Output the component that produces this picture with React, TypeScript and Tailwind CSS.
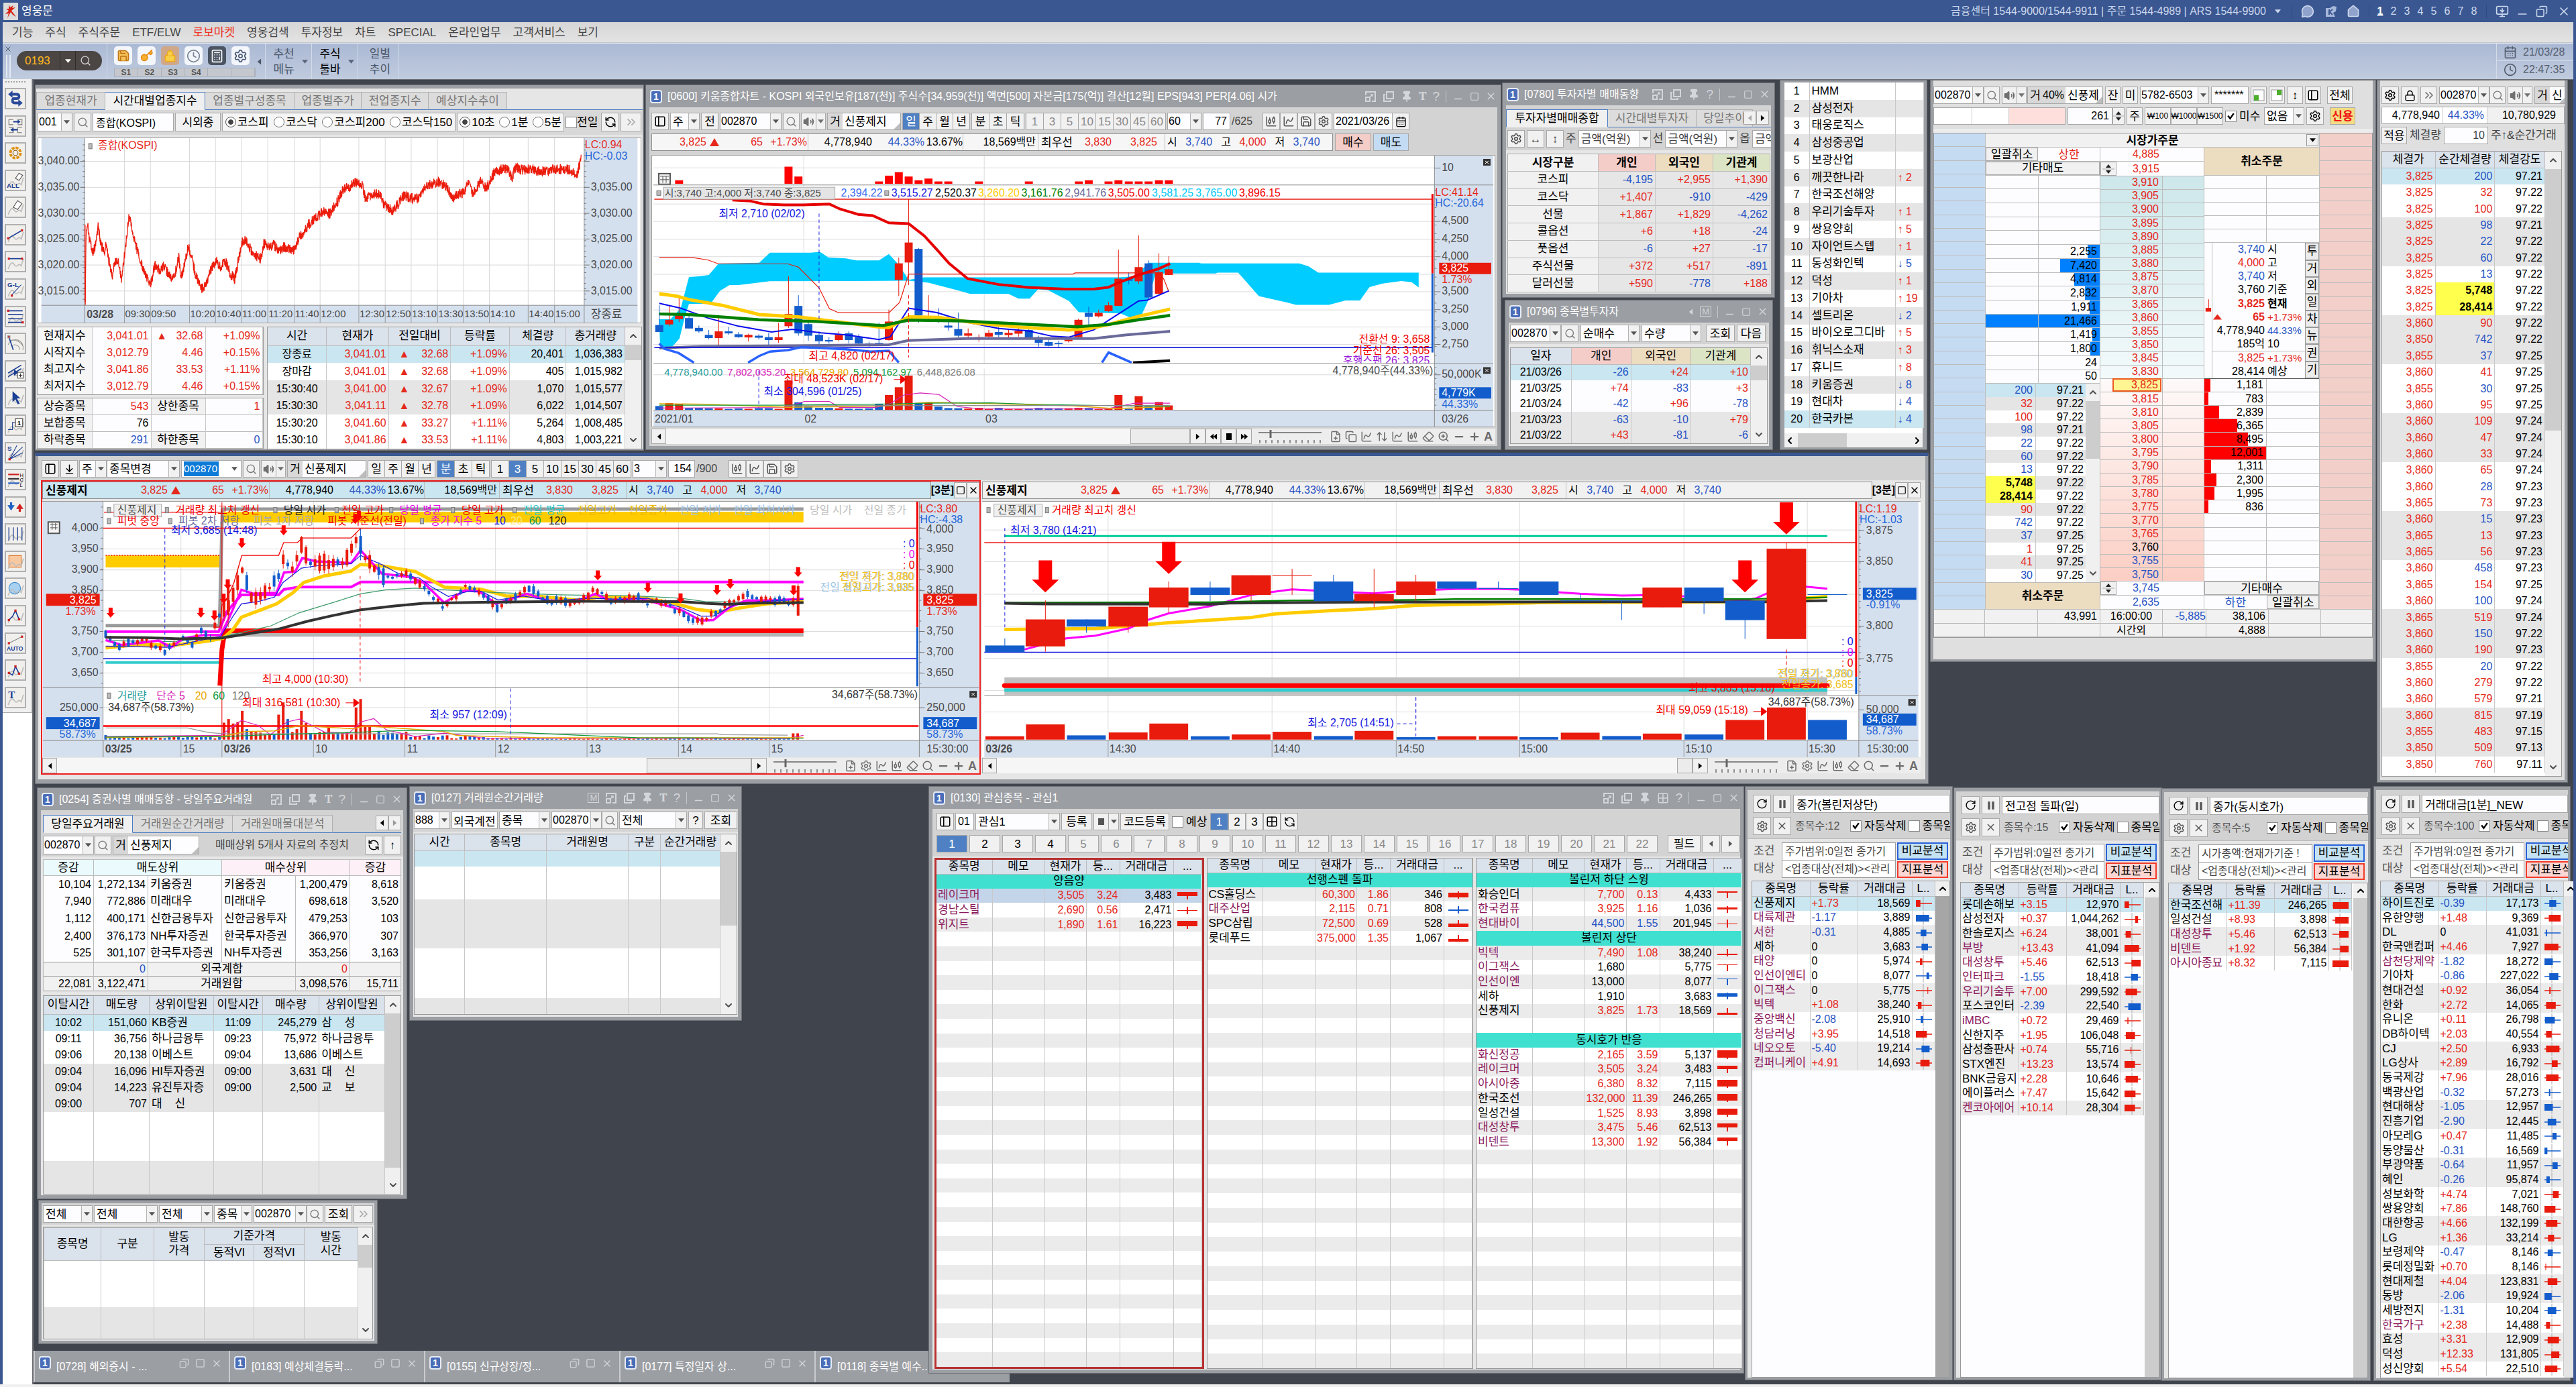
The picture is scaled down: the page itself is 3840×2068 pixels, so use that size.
import type { ReactNode } from "react";
import clsx from "clsx";
import {
  Search,
  Settings,
  Save,
  RotateCw,
  Volume2,
  Pin,
  Copy,
  Square,
  Minus,
  Plus,
  X,
  CalendarDays,
  Clock,
  Home,
  MessageCircle,
  MonitorDown,
  Key,
  Lock,
  Calculator,
  Pause,
  ChevronUp,
  ChevronDown,
  ChevronLeft,
  ChevronRight,
  ChevronsRight,
  ArrowUpDown,
  PanelLeft,
  ArrowDownToLine,
  ChartCandlestick,
  ChartSpline,
  FilePlus,
  Eraser,
  ZoomIn,
  Grid2x2,
  RefreshCcw,
} from "lucide-react";

/* ---------- helpers ---------- */

const R = "text-[#e5281b]";
const B = "text-[#2753c4]";
const V = "text-[#8b1a5c]";

type P = [number, number];

function rnd(i: number) {
  const s = Math.sin(i * 12.9898) * 43758.5453;
  return s - Math.floor(s);
}

function lerpAt(pts: P[], x: number) {
  for (let i = 1; i < pts.length; i++) {
    if (x <= pts[i][0]) {
      const [x0, y0] = pts[i - 1];
      const [x1, y1] = pts[i];
      return y0 + ((y1 - y0) * (x - x0)) / (x1 - x0 || 1);
    }
  }
  return pts[pts.length - 1][1];
}

function makeScale(kx: number, ky: number, ox: number, oy: number) {
  const x = (v: number) => v / kx + ox;
  const y = (v: number) => v / ky + oy;
  const line = (pts: P[]) => pts.map((p) => `${x(p[0]).toFixed(1)},${y(p[1]).toFixed(1)}`).join(" ");
  return { x, y, line };
}

function signed(v: string) {
  if (v.startsWith("-")) return B;
  if (v.startsWith("+")) return R;
  return "text-black";
}

/* ---------- small controls ---------- */

function Tri({ className }: { className?: string }) {
  return (
    <svg viewBox="0 0 10 6" className={clsx("w-[9px] h-[6px] shrink-0", className)}>
      <path d="M0 0H10L5 6Z" fill="currentColor" />
    </svg>
  );
}

function UpDown() {
  return (
    <svg viewBox="0 0 18 20" className="w-[18px] h-5 shrink-0">
      <path d="M5 8L9 3L13 8ZM5 12L9 17L13 12Z" fill="#222" />
      <path d="M0 10H18" stroke="#a8a8a8" />
    </svg>
  );
}

function Btn({ children, className, label }: { children?: ReactNode; className?: string; label?: string }) {
  return (
    <button
      aria-label={label}
      className={clsx(
        "h-full shrink-0 flex items-center justify-center border border-[#a8a8a8] text-[17px] leading-none whitespace-nowrap overflow-hidden",
        className?.includes("bg-") ? "" : "bg-[#f1f1f1]",
        className
      )}
    >
      {children}
    </button>
  );
}

function Combo({ value, label, className, num }: { value: string; label: string; className?: string; num?: boolean }) {
  return (
    <div className={clsx("relative h-full shrink-0 border border-[#a8a8a8] bg-[#fdfdff]", className)}>
      <select
        aria-label={label}
        className={clsx("appearance-none w-full h-full pr-0 bg-transparent leading-none", num ? "pl-px text-[16px]" : "pl-[3px] text-[17px]")}
      >
        <option>{value}</option>
      </select>
      <span className="absolute right-0 inset-y-0 w-4 border-l border-[#b5b5b5] bg-[#f1f1f1] flex items-center justify-center pointer-events-none text-[#555]">
        <Tri />
      </span>
    </div>
  );
}

function Field({ value, label, className, size = "text-[16px]" }: { value: string; label: string; className?: string; size?: string }) {
  return (
    <input
      aria-label={label}
      defaultValue={value}
      className={clsx("h-full min-w-0 border border-[#a8a8a8] bg-[#fdfdff] px-1 leading-none", size, className)}
    />
  );
}

function Check({ text, on, className }: { text: string; on?: boolean; className?: string }) {
  return (
    <label className={clsx("flex items-center gap-1 text-[17px] leading-none whitespace-nowrap shrink-0 overflow-hidden", className)}>
      <span className="relative w-[17px] h-[17px] shrink-0">
        <input type="checkbox" defaultChecked={on} className="appearance-none block w-full h-full border border-[#8a8a8a] bg-white" />
        {on && (
          <svg viewBox="0 0 12 12" className="absolute inset-[2px] w-[13px] h-[13px] pointer-events-none">
            <path d="M2 5L5 9L10 2" fill="none" stroke="#000" strokeWidth="2.200" />
          </svg>
        )}
      </span>
      {text}
    </label>
  );
}

function Radio({ text, on, name }: { text: string; on?: boolean; name: string }) {
  return (
    <label className="flex items-center gap-[2px] text-[17px] leading-none whitespace-nowrap">
      <input
        type="radio"
        name={name}
        defaultChecked={on}
        className="appearance-none w-4 h-4 rounded-full border border-[#777] bg-white checked:border-[#555] checked:bg-[radial-gradient(circle,#444_35%,#fff_42%)]"
      />
      {text}
    </label>
  );
}

function IconSearch({ className }: { className?: string }) {
  return (
    <Btn label="검색" className={clsx("text-[#7b7b7b]", className ?? "w-[25px]")}>
      <Search size={17} />
    </Btn>
  );
}

function Speaker() {
  return (
    <div className="flex h-full shrink-0 text-[#707070]">
      <Btn label="음성" className="w-[23px]">
        <Volume2 size={17} fill="#707070" />
      </Btn>
      <Btn label="음성 메뉴" className="w-[15px] -ml-px">
        <Tri />
      </Btn>
    </div>
  );
}

function StockName({ mark = "거", name, className, pct }: { mark?: string; name: string; className?: string; pct?: string }) {
  return (
    <div className={clsx("h-full shrink-0 flex border border-[#a8a8a8] bg-[#fdfdff] text-[17px] leading-none overflow-hidden relative", className)}>
      <span className="w-[22px] bg-[#d8d8d8] flex items-center justify-center shrink-0">{mark}</span>
      {pct && <span className="bg-[#d8d8d8] text-[16px] flex items-center pr-[2px] shrink-0">{pct}</span>}
      <span className="flex items-center pl-[3px] whitespace-nowrap">{name}</span>
      <svg viewBox="0 0 10 10" className="absolute right-0 bottom-0 w-[10px] h-[10px]">
        <path d="M10 0V10H0Z" fill="#bdbdbd" />
      </svg>
    </div>
  );
}

function VScroll({ thumb, className }: { thumb: string; className?: string }) {
  return (
    <div className={clsx("shrink-0 bg-[#f0f0f0] flex flex-col items-center text-[#505050]", className ?? "w-6")}>
      <ChevronUp size={16} strokeWidth={3} className="my-[5px] shrink-0" />
      <div className={clsx("w-full shrink-0 bg-[#cdcdcd]", thumb)} />
      <ChevronDown size={16} strokeWidth={3} className="mt-auto mb-[5px] shrink-0" />
    </div>
  );
}

/* ---------- window frame ---------- */

const winIcons: Record<string, ReactNode> = {
  fit: (
    <svg viewBox="0 0 18 18" className="w-[18px] h-[18px]" fill="none" stroke="currentColor" strokeWidth="2">
      <path d="M2 7V2H16V16H11" />
      <path d="M2 10H8V16H2Z" />
      <path d="M8 10L12 6M9 6H12V9" strokeWidth="1.500" />
    </svg>
  ),
  copy: (
    <svg viewBox="0 0 18 18" className="w-[18px] h-[18px]" fill="none" stroke="currentColor" strokeWidth="2">
      <path d="M6 2H16V12H6Z" />
      <path d="M4 6H2V16H12V14" />
    </svg>
  ),
  pin: <Pin size={18} fill="#d3d6da" />,
  T: <b className="font-serif text-[19px]">T</b>,
  help: <b className="text-[19px] font-normal">?</b>,
  grid: <Grid2x2 size={18} />,
  M: <span className="border border-[#d3d6da] text-[13px] px-[2px]">M</span>,
  left: <Tri className="rotate-90" />,
};

function Badge() {
  return (
    <span className="w-[18px] h-5 shrink-0 rounded-[4px] border-2 border-[#e6ebf5] bg-[#4a6db8] text-white text-[14px] font-bold leading-none flex items-center justify-center">
      1
    </span>
  );
}

function Win({ title, icons, className, children, pad, bg = "bg-[#d3d3d3]" }: { title?: string; icons?: string[]; className: string; children: ReactNode; pad?: string; bg?: string }) {
  return (
    <section className={clsx("absolute flex flex-col border border-[#6d7075] bg-[#9b9ea3]", className)}>
      {title && (
        <header className="h-[33px] shrink-0 flex items-center gap-2 pl-[6px] pr-[6px] text-white">
          <Badge />
          <h2 className="flex-1 min-w-0 overflow-hidden whitespace-nowrap text-[16px] leading-[20px]">{title}</h2>
          <div className="flex items-center gap-[9px] text-[#d3d6da] shrink-0">
            {icons?.map((k) => (
              <button key={k} aria-label={k} className="flex items-center justify-center leading-none">
                {winIcons[k]}
              </button>
            ))}
            <span className="w-px h-[18px] bg-[#c4c7cb]" />
            <button aria-label="최소화"><Minus size={17} className="translate-y-1" /></button>
            <button aria-label="최대화"><Square size={14} /></button>
            <button aria-label="닫기"><X size={17} /></button>
          </div>
        </header>
      )}
      <div className={clsx("flex-1 min-h-0 flex flex-col", bg, pad ?? "mx-[5px] mb-[5px]")}>{children}</div>
    </section>
  );
}

function Tabs({ items, className }: { items: [string, string][]; className?: string }) {
  return (
    <div className={clsx("flex h-[27px] shrink-0 border-b border-[#4a7cc4]", className)}>
      {items.map(([t, w], i) => (
        <button
          key={t}
          className={clsx(
            "h-[27px] border text-[17px] leading-none whitespace-nowrap overflow-hidden",
            w,
            t.startsWith("*") ? "border-[#4a7cc4] border-b-[#eee] bg-[#f0f0f0] text-black" : "border-[#b0b0b0] border-b-[#4a7cc4] bg-[#dcdcdc] text-[#777]",
            i > 0 && "border-l-0"
          )}
        >
          {t.replace("*", "")}
        </button>
      ))}
    </div>
  );
}

/* ---------- tables ---------- */

type Cell = string | [string, string];

function Grid({ cols, head, rows, align, className, rowClass, headClass = "h-6 bg-[#dae2ec]", headCls }: {
  cols: string[];
  head?: string[];
  rows: Cell[][];
  align: string[];
  className?: string;
  rowClass?: (i: number) => string;
  headClass?: string;
  headCls?: string[];
}) {
  return (
    <table className={clsx("table-fixed border-collapse bg-[#fdfdff] text-[16px] leading-[18px]", className)}>
      <colgroup>
        {cols.map((c, i) => (
          <col key={i} className={c} />
        ))}
      </colgroup>
      {head && (
        <thead>
          <tr className={headClass}>
            {head.map((h, i) => (
              <th key={i} className={clsx("font-normal text-[17px] p-0 border-r border-b border-[#bcbcbc] whitespace-nowrap overflow-hidden", headCls?.[i])}>
                {h}
              </th>
            ))}
          </tr>
        </thead>
      )}
      <tbody>
        {rows.map((r, i) => (
          <tr key={i} className={clsx("h-[18px]", rowClass?.(i))}>
            {r.map((c, j) => {
              const [t, cls] = typeof c === "string" ? [c, ""] : c;
              return (
                <td key={j} className={clsx("py-0 px-[3px] border-r border-[#c8c8c8] whitespace-nowrap overflow-hidden", align[j], cls)}>
                  {t}
                </td>
              );
            })}
          </tr>
        ))}
      </tbody>
    </table>
  );
}

const L = "text-left text-[17px]";
const C = "text-center";
const E = "text-right";
const band3 = (i: number) => (i === 0 ? "bg-[#c9e6f1]" : i % 6 >= 3 ? "bg-[#e5e5e5]" : "bg-white");

/* ---------- svg pieces ---------- */

function T({ x, y, c = "#4a4a4a", children, end, bold, size = 16 }: { x: number; y: number; c?: string; children: ReactNode; end?: boolean; bold?: boolean; size?: number }) {
  return (
    <text x={x} y={y} fill={c} fontSize={size} fontWeight={bold ? 700 : 400} textAnchor={end ? "end" : "start"} dominantBaseline="central">
      {children}
    </text>
  );
}

type Candle = [number, number, number, number, number, "r" | "b"];
const tone = { r: "#e81b0c", b: "#125ccc" };

function Candles({ data, w, s }: { data: Candle[]; w: number; s: ReturnType<typeof makeScale> }) {
  return (
    <g>
      {data.map(([x, hi, top, bot, lo, c], i) => (
        <g key={i} fill={tone[c]} stroke={tone[c]}>
          <line x1={s.x(x)} x2={s.x(x)} y1={s.y(hi)} y2={s.y(lo)} />
          <rect x={s.x(x) - w / 2} y={s.y(top)} width={w} height={Math.max(1, s.y(bot) - s.y(top))} stroke="none" />
        </g>
      ))}
    </g>
  );
}

function Ticks({ x, y0, y1, step, dir }: { x: number; y0: number; y1: number; step: number; dir: number }) {
  const out = [];
  for (let y = y0; y < y1; y += step) out.push(y);
  return (
    <g stroke="#777">
      {out.map((y) => (
        <line key={y} x1={x} x2={x + dir * 3} y1={y} y2={y} />
      ))}
    </g>
  );
}

function CloseMark({ x, y }: { x: number; y: number }) {
  return (
    <g>
      <rect x={x} y={y} width="11" height="10" fill="#333" />
      <path d={`M${x + 3} ${y + 3}l5 4m0 -4l-5 4`} stroke="#fff" />
    </g>
  );
}

/* ---------- [업종] index chart ---------- */

const kospi: P[] = [
  [197, 1040], [199, 790], [203, 775], [208, 830], [216, 870], [222, 840], [228, 780], [235, 840], [243, 870], [248, 840],
  [255, 900], [262, 950], [270, 895], [277, 905], [285, 960], [292, 880], [303, 745], [310, 780], [318, 840], [328, 880],
  [340, 935], [350, 965], [357, 975], [366, 910], [375, 930], [388, 915], [405, 960], [416, 935], [424, 885], [430, 955],
  [440, 900], [447, 845], [456, 890], [465, 950], [475, 980], [483, 998], [492, 970], [500, 930], [514, 895], [525, 920],
  [537, 900], [550, 945], [560, 960], [568, 900], [578, 830], [590, 830], [598, 858], [608, 875], [622, 893], [631, 835],
  [640, 848], [655, 842], [665, 860], [680, 850], [703, 862], [715, 820], [725, 800], [740, 770], [765, 740], [775, 722],
  [790, 735], [810, 690], [822, 650], [840, 640], [855, 625], [870, 640], [878, 688], [890, 670], [910, 665], [922, 700],
  [933, 718], [945, 722], [957, 700], [970, 670], [985, 680], [1005, 683], [1018, 650], [1035, 630], [1055, 625], [1075, 640],
  [1088, 682], [1105, 665], [1118, 660], [1127, 625], [1137, 668], [1157, 622], [1170, 648], [1190, 590], [1210, 580], [1225, 580],
  [1232, 618], [1240, 575], [1260, 583], [1280, 580], [1300, 588], [1330, 583], [1350, 580], [1375, 583], [1390, 598], [1398, 560], [1401, 535],
];

function IndexChart() {
  const s = makeScale(1.6165, 2.306, -56, -205);
  const pts: P[] = [];
  for (let x = 197; x < 1401; x += 0.6) pts.push([x, lerpAt(kospi, x) + (rnd(x) - 0.5) * 36]);
  const gy = [553, 643, 733, 822, 912, 1002];
  const gx: [number, string][] = [
    [292, "09:30"], [355, "09:50"], [450, "10:20"], [513, "10:40"], [576, "11:00"], [640, "11:20"], [704, "11:40"], [767, "12:00"], [861, "12:30"],
    [925, "12:50"], [988, "13:10"], [1052, "13:30"], [1115, "13:50"], [1178, "14:10"], [1272, "14:40"], [1336, "15:00"],
  ];
  const vals = ["3,040.00", "3,035.00", "3,030.00", "3,025.00", "3,020.00", "3,015.00"];
  return (
    <svg viewBox="0 0 895 277" className="block w-full h-[277px] shrink-0 border border-[#a0a0a0] bg-white">
      <rect width="65" height="277" fill="#d5e0ee" />
      <rect x="815" width="80" height="277" fill="#d5e0ee" />
      <rect y="251" width="895" height="26" fill="#d5e0ee" />
      <g stroke="#d9d9d9">
        {gy.map((y) => <line key={y} x1="65" x2="815" y1={s.y(y)} y2={s.y(y)} />)}
        {gx.map(([x]) => <line key={x} x1={s.x(x)} x2={s.x(x)} y1="0" y2="251" />)}
      </g>
      <path d="M65 0V277M815 0V277M0 251H895" stroke="#8a8a8a" fill="none" />
      {gy.map((y, i) => (
        <g key={y}>
          <T x={57} y={s.y(y - 2)} end>{vals[i]}</T>
          <T x={825} y={s.y(y - 2)}>{i === 0 ? "" : vals[i]}</T>
          <path d={`M58 ${s.y(y)}h7M815 ${s.y(y)}h8`} stroke="#777" />
        </g>
      ))}
      <Ticks x={65} y0={10} y1={250} step={8} dir={-1} />
      <Ticks x={815} y0={10} y1={250} step={8} dir={1} />
      {gx.map(([x, t]) => (
        <g key={t}>
          <line x1={s.x(x)} x2={s.x(x)} y1="251" y2="277" stroke="#999" />
          <T x={s.x(x) + 1} y={264} size={15}>{t}</T>
        </g>
      ))}
      <T x={68} y={264} bold>03/28</T>
      <T x={825} y={264} size={17}>장종료</T>
      <polyline points={s.line(pts)} fill="none" stroke="#ec1c0c" strokeWidth="1.300" />
      <path d="M65.500 246V130" stroke="#ec1c0c" strokeWidth="1.500" />
      <rect x="71" y="8" width="5" height="8" fill="#bbb" stroke="#777" />
      <T x={85} y={11} c="#e5281b">종합(KOSPI)</T>
      <T x={816} y={10} c="#e5281b">LC:0.94</T>
      <T x={816} y={27} c="#2466d8">HC:-0.03</T>
    </svg>
  );
}

function IndexWindow() {
  const idx: Cell[][] = [
    ["현재지수", ["3,041.01", R], ["▲   32.68", R + " whitespace-pre"], ["+1.09%", R]],
    ["시작지수", ["3,012.79", R], ["4.46", R], ["+0.15%", R]],
    ["최고지수", ["3,041.86", R], ["33.53", R], ["+1.11%", R]],
    ["최저지수", ["3,012.79", R], ["4.46", R], ["+0.15%", R]],
  ];
  const cnt: Cell[][] = [
    ["상승종목", ["543", R], ["상한종목", "!text-center text-[17px] bg-[#f1f1f1]"], ["1", R]],
    ["보합종목", "76", "", ""],
    ["하락종목", ["291", B], ["하한종목", "!text-center text-[17px] bg-[#f1f1f1]"], ["0", B]],
  ];
  const up = (t: string, p: string, d: string, r: string, v: string, tv: string): Cell[] => [t, [p, R], [`▲    ${d}`, R + " whitespace-pre"], [r, R], v, tv];
  const rows = [
    up("장종료", "3,041.01", "32.68", "+1.09%", "20,401", "1,036,383"),
    up("장마감", "3,041.01", "32.68", "+1.09%", "405", "1,015,982"),
    up("15:30:40", "3,041.00", "32.67", "+1.09%", "1,070", "1,015,577"),
    up("15:30:30", "3,041.11", "32.78", "+1.09%", "6,022", "1,014,507"),
    up("15:30:20", "3,041.60", "33.27", "+1.11%", "5,264", "1,008,485"),
    up("15:30:10", "3,041.86", "33.53", "+1.11%", "4,803", "1,003,221"),
  ];
  return (
    <Win className="left-[4px] top-[8px] w-[908px] h-[546px]" pad="mt-[5px] mx-px mb-[2px]" bg="bg-[#e6e6e6]">
      <Tabs
        className="mt-[5px]"
        items={[["업종현재가", "w-[103px]"], ["*시간대별업종지수", "w-[149px]"], ["업종별구성종목", "w-[133px]"], ["업종별주가", "w-[100px]"], ["전업종지수", "w-[100px]"], ["예상지수추이", "w-[117px]"]]}
      />
      <div className="bg-[#d8d8d8] pt-1 pb-[5px] px-[2px] mb-1 shrink-0">
        <div className="flex h-7 gap-[2px]">
          <Combo value="001" label="업종코드" className="w-[52px]" num />
          <IconSearch className="w-[26px]" />
          <Field value="종합(KOSPI)" label="업종명" className="w-[121px]" />
          <Btn className="w-[68px]">시외종</Btn>
          <fieldset className="flex items-center justify-around w-[348px] border border-[#a8a8a8] bg-[#f5f5f5]">
            <Radio name="mkt" text="코스피" on />
            <Radio name="mkt" text="코스닥" />
            <Radio name="mkt" text="코스피200" />
            <Radio name="mkt" text="코스닥150" />
          </fieldset>
          <fieldset className="flex items-center justify-around w-[160px] border border-[#a8a8a8] bg-[#f5f5f5]">
            <Radio name="unit" text="10초" on />
            <Radio name="unit" text="1분" />
            <Radio name="unit" text="5분" />
          </fieldset>
          <Check text="전일" className="w-[51px] !gap-0" />
          <Btn label="새로고침" className="w-[27px]"><RefreshCcw size={18} /></Btn>
          <Btn label="더보기" className="flex-1 text-[#aaa]"><ChevronsRight size={20} /></Btn>
        </div>
      </div>
      <div className="px-[2px] flex flex-col flex-1 min-h-0">
        <IndexChart />
        <div className="flex gap-2 mt-[6px]">
          <div className="w-[335px] shrink-0">
            <Grid cols={["w-[81px]", "w-[88px]", "w-[81px]", "w-[85px]"]} align={["text-center text-[17px] bg-[#f6f6f6]", E, E, E]} rows={idx} className="w-full h-[100px] outline outline-[#9a9a9a]" />
            <Grid
              cols={["w-[81px]", "w-[88px]", "w-[81px]", "w-[85px]"]}
              align={["text-center text-[17px] bg-[#f1f1f1]", E, E, E]}
              rows={cnt}
              rowClass={() => "border-b border-[#bbb]"}
              className="w-full h-[75px] mt-[6px] outline outline-[#9a9a9a]"
            />
          </div>
          <div className="flex flex-1 outline outline-[#9a9a9a]">
            <Grid
              cols={["w-[87px]", "w-[92px]", "w-[92px]", "w-[87px]", "w-[84px]", "w-[87px]"]}
              head={["시간", "현재가", "전일대비", "등락률", "체결량", "총거래량"]}
              align={[C, E, E, E, E, E]}
              rows={rows}
              headClass="h-[27px] bg-[#dae2ec]"
              rowClass={(i) => (i === 0 ? "bg-[#c9e6f1]" : i === 2 || i === 3 ? "bg-[#e5e5e5]" : "bg-white")}
              className="flex-1 h-[181px]"
            />
            <VScroll thumb="h-[23px]" className="w-6" />
          </div>
        </div>
      </div>
    </Win>
  );
}

/* ---------- quote strip shared by the charts ---------- */

function Quote({ name, className }: { name?: string; className?: string }) {
  const cell = "flex items-center h-full border-r border-[#bdbdbd] shrink-0";
  return (
    <div className={clsx("flex items-center border border-[#8f8f8f] text-[16px] leading-none whitespace-nowrap overflow-hidden", className)}>
      {name && <b className="w-[105px] shrink-0 pl-1 text-[17px]">{name}</b>}
      <div className={clsx(cell, "w-[233px]", R)}>
        <span className="w-[81px] text-right">3,825</span>
        <span className="w-6 flex justify-center">
          <svg viewBox="0 0 14 12" className="w-[14px] h-3"><path d="M7 0L14 12H0Z" fill="currentColor" /></svg>
        </span>
        <span className="w-[60px] text-right">65</span>
        <span className="w-[66px] text-right">+1.73%</span>
      </div>
      <div className={clsx(cell, "w-[231px]")}>
        <span className="w-[95px] text-right">4,778,940</span>
        <span className={clsx("w-[78px] text-right", B)}>44.33%</span>
        <span className="w-[57px] text-right">13.67%</span>
      </div>
      <div className={clsx(cell, "w-[112px] justify-end pr-[3px]")}>18,569백만</div>
      <div className={clsx(cell, "w-[189px]")}>
        <span className="w-[52px] pl-1 text-[17px]">최우선</span>
        <span className={clsx("w-[57px] text-right", R)}>3,830</span>
        <span className={clsx("w-[68px] text-right", R)}>3,825</span>
      </div>
      <div className="flex items-center gap-[13px] pl-[3px]">
        <span>시 <span className={clsx("pl-2", B)}>3,740</span></span>
        <span>고 <span className={clsx("pl-2", R)}>4,000</span></span>
        <span>저 <span className={clsx("pl-2", B)}>3,740</span></span>
      </div>
    </div>
  );
}

function ChartScroll({ thumb, player }: { thumb: string; player?: boolean }) {
  return (
    <div className="flex h-[23px] shrink-0 items-stretch bg-[#ededed] text-[#6d6d6d]">
      <Btn label="왼쪽" className="w-[22px]"><Tri className="rotate-90 text-black" /></Btn>
      <div className="flex-1 bg-[#f6f6f6] flex justify-end">
        <div className={clsx("border border-[#a8a8a8] bg-[#ececec]", thumb)} />
      </div>
      <Btn label="오른쪽" className="w-[23px]"><Tri className="-rotate-90 text-black" /></Btn>
      {player && (
        <>
          <Btn label="뒤로" className="w-[23px] text-black"><Tri className="rotate-90" /><Tri className="rotate-90 -ml-1" /></Btn>
          <Btn label="정지" className="w-[23px] text-black"><span className="w-2 h-[10px] bg-black" /></Btn>
          <Btn label="앞으로" className="w-[23px] text-black"><Tri className="-rotate-90" /><Tri className="-rotate-90 -ml-1" /></Btn>
        </>
      )}
      <svg viewBox="0 0 100 23" className="w-[100px] mx-2">
        <path d="M2 6H96" stroke="#888" strokeWidth="2" />
        <path d="M20 2V14" stroke="#666" strokeWidth="3" />
        {Array.from({ length: 11 }, (_, i) => <path key={i} d={`M${4 + i * 9} 17v5`} stroke="#333" />)}
      </svg>
      <div className="flex items-center gap-[5px] pr-1">
        <FilePlus size={18} />
        {player ? <><Copy size={18} /><ChartSpline size={18} /><ArrowUpDown size={18} /></> : <Settings size={18} />}
        <ChartSpline size={18} />
        <ChartCandlestick size={18} />
        <Eraser size={18} />
        {player ? <ZoomIn size={18} /> : <Search size={18} />}
        <Minus size={18} strokeWidth={3} />
        <Plus size={18} strokeWidth={3} />
        <b className="text-[18px] leading-none">A</b>
      </div>
    </div>
  );
}

function PeriodBar({ on, unit, muted, combo }: { on: string; unit?: string; muted?: boolean; combo: string }) {
  const one = (t: string, w: string, sel: boolean, dim?: boolean) => (
    <Btn key={t} className={clsx(w, "-ml-px first:ml-0", sel ? "bg-[#4f80c4] text-white" : dim ? "text-[#8a8a8a]" : "")}>{t}</Btn>
  );
  return (
    <>
      <div className="flex h-full">{["일", "주", "월", "년"].map((t) => one(t, "w-[26px]", t === on))}</div>
      <div className="flex h-full">{["분", "초", "틱"].map((t) => one(t, "w-[27px]", t === on))}</div>
      <div className="flex h-full">{["1", "3", "5", "10", "15", "30", "45", "60"].map((t) => one(t, "w-[27px]", t === unit, muted))}</div>
      <Combo value={combo} label="주기" className="w-[51px]" num />
    </>
  );
}

/* ---------- [0600] daily chart ---------- */

const daily: Candle[] = [
  [48, 1050, 1118, 1142, 1142, "b"], [72, 1050, 1100, 1116, 1122, "r"], [96, 1020, 1085, 1098, 1108, "r"], [120, 1080, 1094, 1130, 1130, "b"],
  [144, 1120, 1128, 1140, 1145, "b"], [168, 1135, 1152, 1163, 1168, "b"], [192, 1085, 1140, 1163, 1190, "r"], [216, 1125, 1140, 1147, 1152, "b"],
  [240, 1142, 1150, 1160, 1162, "b"], [264, 1148, 1152, 1161, 1175, "r"], [289, 1150, 1155, 1162, 1168, "b"], [313, 1145, 1160, 1170, 1188, "b"],
  [337, 1110, 1160, 1170, 1180, "r"], [361, 950, 1080, 1122, 1128, "r"], [385, 1015, 1052, 1147, 1155, "b"], [409, 1105, 1115, 1155, 1172, "b"],
  [435, 1140, 1152, 1174, 1185, "b"], [459, 1160, 1170, 1175, 1182, "b"], [483, 1140, 1152, 1170, 1175, "r"], [507, 1140, 1147, 1170, 1182, "b"],
  [531, 1150, 1160, 1182, 1185, "b"], [556, 1175, 1182, 1190, 1195, "b"], [580, 1110, 1180, 1184, 1188, "b"], [604, 1065, 1106, 1170, 1172, "r"],
  [628, 885, 905, 962, 1018, "r"], [652, 683, 833, 902, 980, "r"], [676, 852, 855, 1085, 1110, "b"], [700, 1015, 1090, 1093, 1100, "r"],
  [724, 1060, 1090, 1098, 1110, "b"], [748, 1090, 1120, 1127, 1137, "b"], [772, 1075, 1132, 1155, 1160, "b"], [796, 1130, 1147, 1155, 1163, "r"],
  [822, 1150, 1160, 1163, 1175, "r"], [846, 1135, 1145, 1158, 1162, "r"], [870, 1125, 1142, 1152, 1160, "b"], [894, 1135, 1145, 1153, 1163, "r"],
  [918, 1125, 1138, 1148, 1158, "r"], [943, 1128, 1135, 1162, 1165, "b"], [967, 1155, 1160, 1180, 1193, "b"], [991, 1168, 1177, 1190, 1192, "b"],
  [1015, 1172, 1180, 1184, 1196, "b"], [1039, 1160, 1168, 1174, 1178, "r"], [1063, 1097, 1100, 1160, 1162, "r"], [1088, 1055, 1076, 1090, 1117, "b"],
  [1112, 1065, 1076, 1088, 1092, "r"], [1136, 1038, 1050, 1070, 1072, "r"], [1160, 858, 958, 1052, 1052, "r"], [1185, 937, 960, 965, 978, "b"],
  [1209, 808, 918, 967, 977, "r"], [1233, 895, 905, 1023, 1030, "b"], [1258, 870, 935, 1010, 1012, "r"], [1282, 880, 925, 945, 945, "r"],
];

const dailyVol: Record<number, number> = {
  48: 1398, 72: 1388, 96: 1390, 361: 1310, 385: 1385, 409: 1398, 580: 1390, 604: 1360, 628: 1333, 652: 1293, 676: 1387, 700: 1387, 724: 1400,
  1160: 1360, 1209: 1364, 1233: 1400, 1258: 1384, 1282: 1396,
};

const foreign: P[] = [
  [96, 618], [361, 571], [385, 605], [580, 622], [604, 602], [628, 590], [652, 605], [676, 618], [700, 612], [724, 622], [748, 622], [822, 622], [943, 622],
  [1064, 622], [1088, 618], [1136, 622], [1160, 618], [1185, 622], [1209, 622], [1233, 622], [1258, 618], [1282, 618],
];

function DailyChart() {
  const s = makeScale(1.6165, 2.306, -21, -231);
  const pl = (pts: P[], c: string, w: number, extra = {}) => <polyline points={s.line(pts)} fill="none" stroke={c} strokeWidth={w} {...extra} />;
  const right: [number, string][] = [[573, "10"], [757, "4,500"], [819, "4,250"], [879, "4,000"], [1000, "3,500"], [1062, "3,250"], [1122, "3,000"], [1182, "2,750"], [1287, "50,000K"]];
  const legend: [number, string, string][] = [
    [488, "2,394.22", "#3a6cf0"], [610, "3,515.27", "#1414e0"], [716, "2,520.37", "#000"], [820, "3,260.20", "#ffcc00"], [925, "3,161.76", "#008000"],
    [1030, "2,941.76", "#6a6a9a"], [1135, "3,505.00", "#f00000"], [1241, "3,581.25", "#00c8f8"], [1347, "3,765.00", "#00c8f8"], [1452, "3,896.15", "#f00000"],
  ];
  const vlegend: [number, string, string][] = [
    [60, "4,778,940.00", "#2a9d9d"], [213, "7,802,035.20", "#d822b8"], [365, "3,564,729.80", "#e8a800"], [518, "5,094,162.97", "#109a3a"], [672, "6,448,826.08", "#777"],
  ];
  return (
    <svg viewBox="0 0 1258 406" className="block w-full h-[406px] shrink-0 border border-[#a0a0a0] bg-white">
      <rect x="1170" width="88" height="406" fill="#d5e0ee" />
      <rect y="382" width="1258" height="24" fill="#d5e0ee" />
      <g stroke="#dcdcdc">
        {[575, 700, 760, 822, 882, 943, 1003, 1066, 1125, 1185, 1290].map((y) => <line key={y} x1="0" x2="1170" y1={s.y(y)} y2={s.y(y)} />)}
        {[398, 835].map((x) => <line key={x} x1={s.x(x)} x2={s.x(x)} y1="0" y2="382" />)}
      </g>
      {foreign.map(([x, y]) => <rect key={x} x={s.x(x) - 6} y={s.y(y)} width="12" height={s.y(630) - s.y(y)} fill="#ff0000" />)}
      <g stroke="#555" fill="#f4f4f4">
        <rect x="8" y="27" width="17" height="16" strokeWidth="2" />
        <path d="M10 31H23M14 31V41M19 31V41M10 36H23" />
      </g>
      <polygon
        fill="#00ccff"
        points={s.line([
          [48, 1098], [75, 1098], [100, 1060], [120, 952], [145, 950], [168, 945], [192, 905], [290, 903], [316, 868], [415, 868], [437, 865], [458, 885],
          [500, 888], [525, 895], [580, 895], [604, 873], [628, 910], [652, 962], [690, 953], [1160, 953], [1200, 950], [1233, 903], [1355, 903], [1360, 905],
          [1598, 905], [1620, 915], [1644, 937], [1887, 937], [1887, 988], [1870, 970], [1845, 966], [1800, 975], [1768, 987], [1745, 1033], [1710, 1033],
          [1670, 1048], [1590, 1048], [1568, 1040], [1500, 1018], [1450, 937], [1400, 937], [1395, 940], [1250, 940], [1230, 1040], [1209, 1105], [1165, 1078],
          [1064, 1074], [1040, 1035], [990, 998], [965, 995], [945, 1027], [918, 1027], [893, 1010], [800, 1010], [770, 998], [700, 972], [652, 965],
          [316, 967], [240, 980], [218, 980], [195, 1000], [172, 1045], [120, 1045], [110, 1090], [97, 1165], [75, 1200], [50, 1190],
        ])}
      />
      <Candles data={daily} w={12} s={s} />
      {pl([[48, 885], [130, 885], [165, 893], [192, 907], [360, 907], [385, 918], [435, 990], [460, 1062], [483, 1076], [604, 1076], [630, 1040], [652, 942], [1050, 942], [1055, 938], [1260, 938], [1270, 960], [1282, 1003]], "#e81b0c", 1.2)}
      {pl([[48, 1043], [100, 1060], [168, 1095], [240, 1122], [320, 1142], [370, 1133], [440, 1145], [500, 1152], [580, 1168], [608, 1158], [652, 1060], [720, 1075], [800, 1110], [870, 1130], [940, 1138], [1000, 1157], [1040, 1160], [1100, 1135], [1160, 1080], [1209, 1035], [1230, 1032], [1282, 1000]], "#0a0af0", 2)}
      {pl([[48, 1010], [90, 1018], [120, 1030], [200, 1050], [290, 1082], [385, 1090], [580, 1125], [604, 1127], [652, 1090], [725, 1092], [820, 1112], [920, 1125], [1040, 1135], [1090, 1130], [1140, 1115], [1209, 1088], [1285, 1063]], "#ffcc00", 5)}
      {pl([[48, 1080], [120, 1082], [290, 1100], [430, 1106], [590, 1120], [652, 1101], [780, 1104], [930, 1115], [1060, 1124], [1136, 1116], [1209, 1100], [1285, 1085]], "#008000", 4.5)}
      {pl([[48, 1198], [150, 1192], [380, 1190], [604, 1186], [650, 1172], [790, 1165], [1100, 1165], [1180, 1152], [1285, 1140]], "#6a6a9a", 4)}
      {pl([[225, 686], [270, 690], [300, 700], [350, 703], [395, 703], [460, 700], [485, 717], [530, 736], [565, 740], [604, 765], [652, 768], [690, 810], [725, 865], [750, 905], [795, 958], [870, 978], [940, 988], [1030, 994], [1100, 994], [1136, 988], [1160, 972], [1209, 945], [1255, 925], [1285, 906]], "#e60000", 4)}
      {pl([[36, 683], [1920, 683]], "#e81b0c", 1.5)}
      {pl([[36, 1196], [1920, 1196]], "#1414e0", 1.5)}
      {pl([[48, 1182], [60, 1200], [95, 1215], [132, 1248]], "#2a62ff", 3.5)}
      {pl([[263, 1248], [290, 1225], [316, 1210], [360, 1205], [390, 1195], [435, 1197], [500, 1202], [560, 1210], [604, 1207], [628, 1248]], "#2a62ff", 3.5)}
      {pl([[1120, 1248], [1136, 1213], [1192, 1248]], "#2a62ff", 3.5)}
      {pl([[1195, 1248], [1285, 1241]], "#000", 4)}
      {pl([[435, 733], [435, 1105]], "#2222e0", 1, { strokeDasharray: "5 4" })}
      {pl([[652, 1015], [652, 1230]], "#f01010", 1, { strokeDasharray: "5 4" })}
      {pl([[289, 1255], [289, 1410]], "#2222e0", 1, { strokeDasharray: "5 4" })}
      <T x={s.x(192)} y={s.y(732)} c="#1414e0">최저 2,710 (02/02)</T>
      <T x={s.x(410)} y={s.y(1224)} c="#f00000">최고 4,820 (02/17)</T>
      <rect x={s.x(58)} y={s.y(642)} width="257" height="18" fill="#e4e4e4" stroke="#aaa" />
      <rect x={s.x(42)} y={s.y(654)} width="6" height="7" fill="#bbb" stroke="#777" />
      <rect x={s.x(594)} y={s.y(654)} width="6" height="7" fill="#bbb" stroke="#777" />
      <T x={s.x(61)} y={s.y(662)} size={15}>시:3,740 고:4,000 저:3,740 종:3,825</T>
      {legend.map(([x, t, c]) => <T key={x} x={s.x(x)} y={s.y(662)} c={c}>{t}</T>)}
      <T x={s.x(1914)} y={s.y(1167)} c="#f00000" end>전환선 9: 3,658</T>
      <T x={s.x(1914)} y={s.y(1206)} c="#f00000" end>기준선 26: 3,505</T>
      <T x={s.x(1914)} y={s.y(1240)} c="#9b1bd8" end>후행스팬 26: 3,825</T>
      <rect x="0" y={s.y(1250)} width="1170" height="8" fill="#fff" />
      {daily.map(([x, , , , , c]) => {
        const top = dailyVol[x] ?? 1404 + rnd(x) * 4;
        return <rect key={x} x={s.x(x) - 6} y={s.y(top)} width="12" height={s.y(1411) - s.y(top)} fill={tone[x === 361 ? "r" : c]} />;
      })}
      {pl([[48, 1405], [350, 1403], [400, 1382], [460, 1382], [485, 1403], [570, 1403], [604, 1393], [640, 1360], [680, 1353], [725, 1358], [770, 1400], [830, 1408], [1130, 1408], [1200, 1388], [1285, 1388]], "#d822b8", 1.2)}
      {pl([[48, 1390], [160, 1392], [360, 1402], [600, 1398], [700, 1385], [860, 1390], [1050, 1397], [1150, 1407], [1285, 1400]], "#e8a800", 1.5)}
      {pl([[48, 1395], [345, 1395], [604, 1391], [700, 1388], [850, 1387], [950, 1392], [1285, 1400]], "#109a3a", 1.2)}
      {pl([[350, 1397], [1285, 1396]], "#888", 1.2)}
      {vlegend.map(([x, t, c]) => <T key={x} x={s.x(x)} y={s.y(1281)} c={c} size={15}>{t}</T>)}
      <T x={s.x(350)} y={s.y(1304)} c="#f00000">최대 48,523K (02/17)</T>
      <path d={`M${s.x(616)} ${s.y(1306)}h10m0 -6l8 6l-8 6z`} stroke="#f00000" fill="#f00000" />
      <T x={s.x(301)} y={s.y(1347)} c="#1414e0">최소 304,596 (01/25)</T>
      <T x={1168} y={s.y(1276)} end>4,778,940주(44.33%)</T>
      <path d="M0 44H1258M0 312H1258M0 382H1258M1170 0V406" stroke="#8a8a8a" fill="none" />
      <path d={`M1167 ${s.y(665)}V${s.y(940)}`} stroke="#f00000" strokeWidth="3" />
      <path d={`M1167 ${s.y(940)}V${s.y(1213)}`} stroke="#125ccc" strokeWidth="3" />
      <Ticks x={1170} y0={52} y1={310} step={13} dir={1} />
      <Ticks x={1170} y0={318} y1={380} step={8} dir={1} />
      {right.map(([y, t]) => (
        <g key={y}>
          <T x={1181} y={s.y(y)}>{t}</T>
          <path d={`M1170 ${s.y(y + 3)}h9`} stroke="#777" />
        </g>
      ))}
      <T x={1171} y={s.y(660)} c="#e5281b">LC:41.14</T>
      <T x={1171} y={s.y(697)} c="#2466d8">HC:-20.64</T>
      <rect x="1177" y={s.y(903)} width="78" height="17" fill="#e81b0c" />
      <T x={1181} y={s.y(922)} c="#fff">3,825</T>
      <T x={1181} y={s.y(960)} c="#e5281b">1.73%</T>
      <rect x="1177" y={s.y(1333)} width="78" height="17" fill="#125ccc" />
      <T x={1181} y={s.y(1353)} c="#fff">4,779K</T>
      <T x={1181} y={s.y(1391)} c="#2466d8">44.33%</T>
      <T x={1181} y={394}>03/26</T>
      <T x={2} y={394}>2021/01</T>
      <T x={s.x(400)} y={394}>02</T>
      <T x={s.x(838)} y={394}>03</T>
      <CloseMark x={1243} y={5} />
      <CloseMark x={1243} y={317} />
    </svg>
  );
}

function DailyWindow() {
  return (
    <Win
      title="[0600] 키움종합차트 - KOSPI 외국인보유[187(천)] 주식수[34,959(천)] 액면[500] 자본금[175(억)] 결산[12월] EPS[943] PER[4.06] 시가"
      icons={["fit", "copy", "pin", "T", "help"]}
      className="left-[914px] top-[8px] w-[1276px] h-[545px]"
    >
      <div className="px-[3px] flex flex-col">
        <div className="flex h-[26px] gap-[2px] mt-2 shrink-0">
          <Btn label="패널" className="w-[26px]"><PanelLeft size={18} /></Btn>
          <Combo value="주" label="구분" className="w-[44px]" />
          <Btn className="w-[26px]">전</Btn>
          <Combo value="002870" label="종목코드" className="w-[92px]" num />
          <IconSearch />
          <Speaker />
          <StockName name="신풍제지" className="w-[110px]" />
          <PeriodBar on="일" muted combo="60" />
          <Field value="77" label="조회수" className="w-[41px] text-right" />
          <span className="w-[44px] text-[16px] leading-[26px] text-[#444]">/625</span>
          <div className="flex h-full text-[#555]">
            <Btn label="봉" className="w-[26px]"><ChartCandlestick size={18} /></Btn>
            <Btn label="지표" className="w-[26px]"><ChartSpline size={18} /></Btn>
            <Btn label="저장" className="w-[26px]"><Save size={18} /></Btn>
            <Btn label="설정" className="w-[26px]"><Settings size={18} /></Btn>
          </div>
          <Field value="2021/03/26" label="일자" className="w-[88px] !px-[2px]" />
          <Btn label="달력" className="w-[26px] -ml-[3px]"><CalendarDays size={17} /></Btn>
        </div>
        <div className="flex h-[26px] mt-[5px] gap-[3px] shrink-0">
          <Quote className="w-[1016px] bg-[#f6f6f6]" />
          <Btn className="w-[54px] bg-[#f5cdc8]">매수</Btn>
          <Btn className="w-[53px] bg-[#c4dcf3]">매도</Btn>
        </div>
        <div className="mt-[6px]"><DailyChart /></div>
        <div className="mt-[2px]"><ChartScroll thumb="w-[89px]" player /></div>
      </div>
    </Win>
  );
}

/* ---------- [0780], [0796] investor windows ---------- */

function InvestorWindow() {
  const data = [
    ["코스피", "-4,195", "+2,955", "+1,390"],
    ["코스닥", "+1,407", "-910", "-429"],
    ["선물", "+1,867", "+1,829", "-4,262"],
    ["콜옵션", "+6", "+18", "-24"],
    ["풋옵션", "-6", "+27", "-17"],
    ["주식선물", "+372", "+517", "-891"],
    ["달러선물", "+590", "-778", "+188"],
  ];
  return (
    <Win title="[0780] 투자자별 매매동향" icons={["fit", "copy", "pin", "help"]} className="left-[2191px] top-[5px] w-[407px] h-[321px]">
      <div className="relative mt-[6px]">
        <Tabs items={[["*투자자별매매종합", "w-[152px]"], ["시간대별투자자", "w-[132px]"], ["당일추이", "w-[84px]"]]} />
        <div className="absolute right-[3px] top-[2px] flex h-[21px]">
          <Btn label="이전 탭" className="w-[19px] text-[#aaa]"><Tri className="rotate-90" /></Btn>
          <Btn label="다음 탭" className="w-[19px]"><Tri className="-rotate-90" /></Btn>
        </div>
      </div>
      <div className="flex h-[26px] gap-[3px] mt-1 pl-[2px] overflow-hidden shrink-0 text-[17px] leading-[26px] text-[#444]">
        <Btn label="설정" className="w-[26px]"><Settings size={18} /></Btn>
        <Btn label="가로" className="w-[26px]">↔</Btn>
        <Btn label="세로" className="w-[26px]">↕</Btn>
        <span>주</span>
        <Combo value="금액(억원)" label="주식 단위" className="w-[108px]" />
        <span>선</span>
        <Combo value="금액(억원)" label="선물 단위" className="w-[108px]" />
        <span>옵</span>
        <Combo value="금액(억원)" label="옵션 단위" className="w-[108px]" />
      </div>
      <div className="flex-1 bg-[#e6e6e6] mt-1 pt-[5px] px-[2px]">
        <Grid
          cols={["w-[135px]", "w-[85px]", "w-[86px]", "w-[85px]"]}
          head={["시장구분", "개인", "외국인", "기관계"]}
          headClass="h-[26px] bg-[#f1f1f1]"
          headCls={["!font-bold", "!font-bold bg-[#f5cdc8]", "!font-bold bg-[#ecdcc0]", "!font-bold bg-[#dbe5c6]"]}
          align={["text-center text-[17px] !bg-[#f1f1f1]", E, E, E]}
          rows={data.map((r) => r.map((v, i): Cell => (i ? [v, signed(v)] : v)))}
          rowClass={() => "bg-[#e6e6e6] border-b border-[#bdbdbd]"}
          className="w-full h-[207px] border border-[#aaa]"
        />
      </div>
    </Win>
  );
}

function StockInvestorWindow() {
  const data = [
    ["21/03/26", "-26", "+24", "+10"],
    ["21/03/25", "+74", "-83", "+3"],
    ["21/03/24", "-42", "+96", "-78"],
    ["21/03/23", "-63", "-10", "+79"],
    ["21/03/22", "+43", "-81", "-6"],
  ];
  return (
    <Win title="[0796] 종목별투자자" icons={["left", "M"]} className="left-[2195px] top-[329px] w-[400px] h-[224px]">
      <div className="flex h-[26px] gap-[3px] mt-[3px] px-[2px] shrink-0">
        <Combo value="002870" label="종목코드" className="w-[76px]" num />
        <IconSearch className="w-[26px] -ml-[3px]" />
        <Combo value="순매수" label="매매구분" className="w-[88px]" />
        <Combo value="수량" label="단위" className="w-[89px]" />
        <Btn className="w-[43px] ml-[4px]">조회</Btn>
        <Btn className="w-[43px]">다음</Btn>
      </div>
      <div className="flex-1 bg-[#e6e6e6] mt-[3px] pt-[5px] px-[2px]">
        <div className="flex h-[144px] border border-[#999]">
          <Grid
            cols={["w-[90px]", "w-[89px]", "w-[89px]", "w-[89px]"]}
            head={["일자", "개인", "외국인", "기관계"]}
            headCls={["", "bg-[#f5cdc8]", "bg-[#ecdcc0]", "bg-[#dbe5c6]"]}
            align={[C, E, E, E]}
            rows={data.map((r) => r.map((v, i): Cell => (i ? [v, signed(v)] : v)))}
            rowClass={(i) => (i === 0 ? "bg-[#c9e6f1]" : i > 2 ? "bg-[#e6e6e6]" : "")}
            className="flex-1 h-full"
          />
          <VScroll thumb="h-[22px]" />
        </div>
      </div>
    </Win>
  );
}

/* ---------- rank list ---------- */

function RankWindow() {
  const data: [string, number][] = [
    ["HMM", 0], ["삼성전자", 0], ["태웅로직스", 0], ["삼성중공업", 0], ["보광산업", 0], ["깨끗한나라", 2], ["한국조선해양", 0], ["우리기술투자", 1], ["쌍용양회", 5],
    ["자이언트스텝", 1], ["동성화인텍", -5], ["덕성", 1], ["기아차", 19], ["셀트리온", -2], ["바이오로그디바", 5], ["휘닉스소재", 3], ["휴니드", 8],
    ["키움증권", -8], ["현대차", -4], ["한국카본", -4],
  ];
  return (
    <Win className="left-[2605px] top-px w-[220px] h-[552px]" pad="mx-[6px] mb-[3px] mt-[3px]" bg="bg-white">
      <Grid
        cols={["w-[37px]", "w-[128px]", "w-[42px]"]}
        align={[C, L, "text-left"]}
        rows={data.map(([n, d], i): Cell[] => [`${i + 1}`, n, d ? [`${d > 0 ? "↑" : "↓"} ${Math.abs(d)}`, d > 0 ? R : B] : ""])}
        rowClass={(i) => (i === 19 ? "bg-[#c9e6f1]" : i % 2 ? "bg-[#e5e5e5]" : "bg-white")}
        className="w-full h-[515px] shrink-0"
      />
      <div className="flex items-center h-[22px] mt-2 bg-[#f0f0f0]">
        <ChevronLeft size={16} strokeWidth={3} />
        <div className="w-[73px] h-full bg-[#cdcdcd] ml-1" />
        <ChevronRight size={16} strokeWidth={3} className="ml-auto" />
      </div>
    </Win>
  );
}

/* ---------- order book ---------- */

const asks: [string, string][] = [
  ["3,910", ""], ["3,905", ""], ["3,900", ""], ["3,895", ""], ["3,890", ""], ["3,885", "2,255"], ["3,880", "7,420"], ["3,875", "4,814"], ["3,870", "2,832"],
  ["3,865", "1,911"], ["3,860", "21,466"], ["3,855", "1,419"], ["3,850", "1,800"], ["3,845", "24"], ["3,830", "50"],
];
const bids: [string, string][] = [
  ["3,825", "1,181"], ["3,815", "783"], ["3,810", "2,839"], ["3,805", "6,365"], ["3,800", "8,495"], ["3,795", "12,001"], ["3,790", "1,311"], ["3,785", "2,300"],
  ["3,780", "1,995"], ["3,775", "836"], ["3,770", ""], ["3,765", ""], ["3,760", ""], ["3,755", ""], ["3,750", ""],
];
const ticks: [string, string, string][] = [
  ["200", "97.21", B], ["32", "97.22", R], ["100", "97.22", R], ["98", "97.21", B], ["22", "97.22", B], ["60", "97.22", B], ["13", "97.22", B],
  ["5,748", "97.22", "font-bold bg-[#ffff4d]"], ["28,414", "97.22", "font-bold bg-[#ffff4d]"], ["90", "97.22", R], ["742", "97.22", B], ["37", "97.25", B],
  ["1", "97.25", R], ["41", "97.25", R], ["30", "97.25", B],
];
const toNum = (v: string) => Number(v.replace(/,/g, "")) || 0;
const hc = "flex-1 min-h-0 flex items-center border-b border-[#bcbcbc] leading-none";

function PriceCells({ data, low }: { data: [string, string][]; low?: boolean }) {
  return (
    <>
      {data.map(([p], i) => (
        <div key={p} className={hc}>
          <div
            className={clsx(
              "w-[93px] h-full flex items-center justify-end pr-[5px] border-r border-[#bcbcbc]",
              low && i === 12 ? "text-black" : low && i > 12 ? B : R
            )}
          >
            {low && i === 0 ? <span className="w-[73px] text-right -mr-1 pr-[3px] border-2 border-[#ee5a20] bg-[#fff593]">{p}</span> : p}
          </div>
        </div>
      ))}
    </>
  );
}

function OrderBook() {
  const side = Array.from({ length: 35 }, (_, i) => i);
  const info: [string, string, string, string][] = [
    ["3,740", B, "시", ""], ["4,000", R, "고", ""], ["3,740", B, "저", ""], ["3,760", "", "기준", ""], ["3,825", `${R} font-bold`, "현재", "font-bold"],
    ["65", `${R} font-bold`, "+1.73%", R], ["4,778,940", "", "44.33%", B], ["185억", "", "10", ""], ["3,825", R, "+1.73%", R], ["28,414", "", "예상", ""],
  ];
  return (
    <div className="h-[753px] shrink-0 flex flex-col border border-[#999] text-[16px] bg-[#fdfdff]">
      <div className="flex-[35] min-h-0 flex">
        <div className="w-[76px] bg-[#c5dbf2] flex flex-col">{side.map((i) => <div key={i} className={hc} />)}</div>
        <div className="flex-1 flex flex-col border-x border-[#bcbcbc]">
          <div className="flex-1 min-h-0 flex items-center justify-center relative bg-[#f1f1f1] border-b border-[#bcbcbc]">
            <b className="text-[17px] leading-none">시장가주문</b>
            <button aria-label="주문 유형" className="absolute right-px inset-y-px w-[18px] border border-[#999] flex items-center justify-center"><Tri className="w-[7px]" /></button>
          </div>
          <div className="flex-[34] min-h-0 flex">
            <div className="w-[171px] shrink-0 flex flex-col border-r border-[#bcbcbc]">
              <div className={hc}>
                <Btn className="w-[78px]">일괄취소</Btn>
                <span className={clsx("flex-1 text-center text-[17px]", R)}>상한</span>
              </div>
              <div className={hc}><Btn className="w-full">기타매도</Btn></div>
              {asks.map(([p, q]) => (
                <div key={p} className={clsx(hc, "relative justify-end pr-1")}>
                  <div className="absolute right-0 inset-y-0 bg-[#0080ff]" style={{ width: `${toNum(q) < 100 ? 0 : (toNum(q) / 21466) * 100}%` }} />
                  <div className="absolute left-[78px] inset-y-0 w-px bg-[#bcbcbc]" />
                  <span className="relative">{q}</span>
                </div>
              ))}
              <div className="flex-[15] min-h-0 flex">
                <div className="flex-1 flex flex-col">
                  {ticks.map(([q, r, c], i) => (
                    <div key={i} className={clsx("flex-1 min-h-0 flex leading-[20px]", i === 0 ? "bg-[#c9e6f1]" : i % 2 ? "bg-[#e5e5e5]" : "bg-white")}>
                      <span className={clsx("w-[75px] text-right pr-1 border-r border-[#c8c8c8]", c)}>{q}</span>
                      <span className="flex-1 text-right pr-[3px]">{r}</span>
                    </div>
                  ))}
                </div>
                <VScroll thumb="h-[86px]" className="w-[21px]" />
              </div>
              <div className="flex-[2] bg-[#ecdcc0] flex items-center justify-center font-bold text-[17px] border-y border-[#bcbcbc]">취소주문</div>
            </div>
            <div className="flex-1 flex flex-col border-r border-[#bcbcbc]">
              <div className={hc}><span className={clsx("w-[88px] text-right", R)}>4,885</span></div>
              <div className={hc}>
                <Btn label="호가 이동" className="w-6"><UpDown /></Btn>
                <span className={clsx("w-16 text-right", R)}>3,915</span>
              </div>
              <div className="flex-[15] min-h-0 flex flex-col bg-gradient-to-b from-[#cde7ea] to-[#f3fafb]"><PriceCells data={asks} /></div>
              <div className="flex-[15] min-h-0 flex flex-col bg-gradient-to-b from-[#fdfafa] to-[#fbcec3]"><PriceCells data={bids} low /></div>
              <div className={hc}>
                <Btn label="호가 이동" className="w-6"><UpDown /></Btn>
                <span className={clsx("w-16 text-right", B)}>3,745</span>
              </div>
              <div className={hc}><span className={clsx("w-[88px] text-right", B)}>2,635</span></div>
            </div>
            <div className="w-[171px] shrink-0 flex flex-col">
              <div className="flex-[2] min-h-0 bg-[#ecdcc0] flex items-center justify-center font-bold text-[17px] border-b border-[#bcbcbc]">취소주문</div>
              <div className="flex-[5] min-h-0 flex flex-col">
                {[0, 1, 2, 3, 4].map((i) => <div key={i} className={hc}><div className="w-[93px] h-full border-r border-[#bcbcbc]" /></div>)}
              </div>
              <div className="flex-[10] min-h-0 flex border-b border-[#555]">
                <div className="w-3 border-r border-[#bcbcbc] relative">
                  <svg viewBox="0 0 12 200" className="absolute inset-0 w-full h-full">
                    <path d="M7 82V98" stroke="#e81b0c" />
                    <rect x="2" y="96" width="9" height="6" fill="#e81b0c" />
                  </svg>
                </div>
                <div className="flex-1 flex flex-col">
                  {info.map(([v, vc, t, tc], i) => (
                    <div key={i} className={clsx("flex-1 min-h-0 flex items-center leading-none whitespace-nowrap", i === 8 && "border-t border-[#bcbcbc]")}>
                      {i === 5 && <Tri className={clsx("w-[13px] h-[11px] rotate-180 ml-px", R)} />}
                      <span className={clsx("text-right", i === 5 ? "w-[64px]" : "w-[78px]", vc)}>{v}</span>
                      <span className={clsx("pl-1", t.endsWith("%") ? "text-[15px]" : "", tc)}>{t}</span>
                    </div>
                  ))}
                </div>
                <div className="w-[21px] flex flex-col">
                  {["투", "거", "외", "일", "차", "뉴", "권", "기"].map((t) => <button key={t} className="flex-1 border border-[#999] bg-[#ececec] text-[17px] leading-none">{t}</button>)}
                </div>
              </div>
              <div className="flex-[15] min-h-0 flex flex-col">
                {bids.map(([p, q]) => (
                  <div key={p} className={hc}>
                    <div className="w-[93px] h-full border-r border-[#bcbcbc] relative flex items-center justify-end pr-1">
                      <div className="absolute left-0 inset-y-0 bg-[#ff0000]" style={{ width: `${(toNum(q) / 12001) * 100}%` }} />
                      <span className="relative">{q}</span>
                    </div>
                  </div>
                ))}
              </div>
              <div className={hc}><Btn className="w-full">기타매수</Btn></div>
              <div className={hc}>
                <span className={clsx("w-[93px] text-center text-[17px]", B)}>하한</span>
                <Btn className="flex-1">일괄취소</Btn>
              </div>
            </div>
          </div>
        </div>
        <div className="w-[78px] bg-[#f3cfca] flex flex-col">{side.map((i) => <div key={i} className={hc} />)}</div>
      </div>
      <div className="flex-[2] min-h-0 flex flex-col bg-[#f1f1f1]">
        {[["43,991", "16:00:00", "-5,885", "38,106"], ["", "시간외", "", "4,888"]].map((r, i) => (
          <div key={i} className={clsx(hc, "text-right [&>span]:h-full [&>span]:border-r [&>span]:border-[#bcbcbc] [&>span]:leading-[20px]")}>
            <span className="w-[76px]" />
            <span className="w-[79px]" />
            <span className="w-[93px] pr-1">{r[0]}</span>
            <span className="w-[93px] !text-center">{r[1]}</span>
            <span className={clsx("w-[65px]", B)}>{r[2]}</span>
            <span className="w-[93px] pr-1">{r[3]}</span>
            <span className="w-[78px]" />
          </div>
        ))}
      </div>
    </div>
  );
}

function OrderWindow() {
  return (
    <Win className="left-[2829px] top-px w-[665px] h-[868px]" pad="mx-1 mb-[3px]" bg="bg-[#dfdfdf]">
      <div className="flex h-[26px] gap-[3px] mt-[9px] shrink-0">
        <Combo value="002870" label="종목코드" className="w-[75px]" num />
        <IconSearch className="w-6 -ml-[3px]" />
        <Speaker />
        <StockName name="신풍제" pct="40%" className="w-[113px] -ml-[2px]" />
        <Btn className="w-[23px]">잔</Btn>
        <Btn className="w-[23px]">미</Btn>
        <Combo value="5782-6503" label="계좌" className="w-[103px]" num />
        <Field value="*******" label="비밀번호" className="w-[56px]" />
        <Btn label="분할 좌" className="w-6"><svg viewBox="0 0 18 18" className="w-[18px]"><rect x="1" y="1" width="16" height="16" fill="#fff" stroke="#999" /><rect x="2" y="9" width="7" height="8" fill="#4cae2c" /></svg></Btn>
        <Btn label="분할 우" className="w-6"><svg viewBox="0 0 18 18" className="w-[18px]"><rect x="1" y="1" width="16" height="16" fill="#fff" stroke="#999" /><rect x="9" y="1" width="7" height="8" fill="#4cae2c" /></svg></Btn>
        <Btn label="정렬" className="w-6">↕</Btn>
        <Btn label="패널" className="w-6"><PanelLeft size={18} /></Btn>
        <Btn className="w-[38px] ml-[6px]">전체</Btn>
      </div>
      <div className="flex h-[26px] gap-[3px] mt-[5px] shrink-0">
        <div className="flex w-[197px] border border-[#a8a8a8] bg-white">
          <span className="w-[57px] border-r border-[#ccc]" />
          <span className="w-[55px] border-r border-[#ccc]" />
          <span className="flex-1 bg-[#ffdfdc]" />
        </div>
        <Field value="261" label="수량" className="w-[67px] text-right" />
        <Btn label="수량 조절" className="w-[18px] -ml-[3px]"><UpDown /></Btn>
        <Btn className="w-6">주</Btn>
        <div className="flex h-full"><Btn className="w-[39px] !text-[12px]">₩100</Btn><Btn className="w-[39px] !text-[12px]">₩1000</Btn><Btn className="w-[39px] !text-[12px]">₩1500</Btn></div>
        <Check text="미수" on className="w-[55px]" />
        <Combo value="없음" label="신용구분" className="w-[60px]" />
        <Btn label="설정" className="w-[26px]"><Settings size={18} /></Btn>
        <Btn className="w-[38px] ml-[6px] bg-[#f3dc84] text-[#f01010] font-bold">신용</Btn>
      </div>
      <div className="bg-[#ececec] mt-[6px] pt-[6px]"><OrderBook /></div>
    </Win>
  );
}

/* ---------- execution list ---------- */

function TickWindow() {
  const y = "!font-bold text-black bg-[#ffff4d]";
  const raw: [string, string, string, string][] = [
    ["3,825", "200", "21", B], ["3,825", "32", "22", R], ["3,825", "100", "22", R], ["3,825", "98", "21", B], ["3,825", "22", "22", B], ["3,825", "60", "22", B],
    ["3,825", "13", "22", B], ["3,825", "5,748", "22", y], ["3,825", "28,414", "22", y], ["3,860", "90", "22", R], ["3,850", "742", "22", B], ["3,855", "37", "25", B],
    ["3,860", "41", "25", R], ["3,855", "30", "25", B], ["3,860", "95", "25", R], ["3,860", "109", "24", R], ["3,860", "47", "24", R], ["3,860", "33", "24", R],
    ["3,860", "65", "24", R], ["3,860", "28", "23", B], ["3,865", "73", "23", R], ["3,860", "15", "23", B], ["3,865", "13", "23", R], ["3,865", "56", "23", R],
    ["3,860", "458", "23", B], ["3,865", "154", "25", R], ["3,860", "100", "24", B], ["3,865", "519", "24", R], ["3,860", "150", "22", B], ["3,860", "190", "23", R],
    ["3,855", "20", "22", B], ["3,860", "279", "22", R], ["3,860", "579", "21", R], ["3,860", "815", "19", R], ["3,855", "483", "15", R], ["3,850", "509", "13", R],
    ["3,850", "760", "11", R],
  ];
  return (
    <Win className="left-[3495px] top-px w-[285px] h-[1048px]" pad="mx-1 mb-[3px]" bg="bg-[#dfdfdf]">
      <div className="pl-[2px] flex flex-col overflow-hidden">
        <div className="flex h-[26px] gap-[3px] mt-[9px] shrink-0">
          <Btn label="설정" className="w-[26px]"><Settings size={18} /></Btn>
          <Btn label="잠금" className="w-[26px]"><Lock size={17} /></Btn>
          <Btn label="더보기" className="w-[25px] text-[#777]"><ChevronsRight size={20} /></Btn>
          <Combo value="002870" label="종목코드" className="w-[75px]" num />
          <IconSearch className="w-6 -ml-[3px]" />
          <Speaker />
          <StockName name="신" className="w-[48px]" />
        </div>
        <div className="flex h-[26px] mt-1 shrink-0 border border-[#a8a8a8] bg-white text-[16px] leading-[24px] text-right">
          <span className="w-[91px] pr-1 border-r border-[#ccc]">4,778,940</span>
          <span className={clsx("w-[66px] pr-1 border-r border-[#ccc]", B)}>44.33%</span>
          <span className="flex-1 pr-3 bg-[#f1f1f1]">10,780,929</span>
        </div>
        <div className="flex h-[26px] gap-1 mt-1 shrink-0 text-[17px] leading-[26px] text-[#444] whitespace-nowrap">
          <Btn className="w-[38px] text-black">적용</Btn>
          <span>체결량</span>
          <Field value="10" label="체결량" className="w-[66px] shrink-0 text-right" />
          <span>주↑&amp;순간거래</span>
        </div>
        <div className="flex h-[933px] mt-[10px] mr-1 border border-[#999] bg-white">
          <Grid
            cols={["w-[80px]", "w-[89px]", "w-[75px]"]}
            head={["체결가", "순간체결량", "체결강도"]}
            align={[E, E, E]}
            rows={raw.map(([p, q, s, c]): Cell[] => [[p, R], [q, c], `97.${s}`])}
            rowClass={band3}
            className="flex-1 h-[926px]"
          />
          <VScroll thumb="h-[390px]" />
        </div>
      </div>
    </Win>
  );
}

/* ---------- 3-minute charts ---------- */

const ma5: P[] = [
  [252, 858], [290, 880], [380, 860], [410, 890], [440, 850], [490, 835], [530, 835], [550, 760], [580, 632], [610, 650], [665, 645], [683, 555], [710, 550],
  [727, 490], [760, 505], [845, 512], [868, 455], [885, 490], [920, 560], [990, 575], [1020, 600], [1070, 690], [1120, 635], [1155, 640], [1195, 695], [1270, 650],
  [1320, 680], [1390, 685], [1435, 650], [1470, 680], [1540, 670], [1600, 700], [1640, 720], [1690, 770], [1720, 768], [1760, 710], [1800, 680], [1860, 680], [1938, 672],
];

const pricePath: P[] = [
  [252, 830], [280, 890], [340, 850], [395, 905], [440, 840], [460, 880], [482, 820], [505, 850], [530, 740], [548, 700], [570, 610], [581, 540], [605, 670], [640, 640],
  [671, 560], [682, 490], [700, 550], [726, 430], [745, 520], [780, 515], [830, 505], [858, 410], [875, 490], [900, 530], [925, 585], [980, 560], [1010, 610], [1070, 715],
  [1100, 660], [1122, 620], [1160, 650], [1195, 710], [1230, 680], [1272, 615], [1310, 680], [1390, 690], [1435, 630], [1470, 685], [1530, 660], [1562, 690], [1600, 690],
  [1641, 735], [1685, 780], [1729, 730], [1761, 690], [1790, 655], [1850, 670], [1900, 690], [1925, 680],
];

function buildMinute(): Candle[] {
  const out: Candle[] = [];
  for (let x = 252, i = 0; x < 1930; x += 11, i++) {
    const mid = lerpAt(pricePath, x) + (rnd(i + 3) - 0.5) * 18;
    const amp = x > 527 && x < 930 ? 34 : 13;
    const h = 4 + rnd(i * 7 + 1) * amp;
    const wick = 6 + rnd(i * 5 + 2) * amp;
    const falling = lerpAt(pricePath, x) > lerpAt(pricePath, x - 11);
    const c = rnd(i * 3 + 9) > (falling ? 0.72 : 0.3) ? "r" : "b";
    out.push([x, mid - h - wick * 0.6, mid - h, mid + h, mid + h + wick * 0.6, c]);
  }
  out.push([1925, 605, 615, 748, 748, "r"], [548, 590, 620, 745, 800, "r"], [868, 360, 390, 470, 500, "b"]);
  return out;
}

const volPeaks: Record<number, number> = {
  26: 1228, 27: 1212, 28: 1232, 29: 1225, 30: 1175, 31: 1257, 32: 1268, 38: 1192, 39: 1137, 40: 1212, 41: 1270, 42: 1257, 43: 1175, 44: 1230, 49: 1250,
  55: 1160, 56: 1122, 57: 1243, 58: 1245, 60: 1265,
};

function SmallArrow({ x, y }: { x: number; y: number }) {
  return <path d={`M${x - 3} ${y}h6v8h3l-6 7l-6 -7h3z`} fill="#ff0000" />;
}

function MinuteChart() {
  const s = makeScale(1.6165, 3, -62, -79);
  const data = buildMinute();
  const pl = (pts: P[], c: string, w: number, extra = {}) => <polyline points={s.line(pts)} fill="none" stroke={c} strokeWidth={w} {...extra} />;
  const labels: [number, string][] = [[353, "4,000"], [446, "3,950"], [540, "3,900"], [633, "3,850"], [816, "3,750"], [910, "3,700"], [1003, "3,650"], [1158, "250,000"]];
  const row1: [number, string, string][] = [
    [420, "거래량 최고치 갱신", "#f00000"], [682, "당일 시가", "#222"], [822, "전일 고가", "#f00000"], [962, "당일 평균", "#e800e8"], [1112, "당일 고가", "#f00000"],
    [1260, "전일 평균", "#2ac8c8"], [1392, "전일고가", "#e8b800"], [1515, "전일종가", "#e8b800"], [1638, "전일 저가", "#9cc4e8"], [1768, "전일 최저시가", "#9cc4e8"],
    [1953, "당일 시가", "#bdbdbd"], [2084, "전일 종가", "#bdbdbd"],
  ];
  const row2: [number, string, string][] = [
    [280, "피벗 중앙", "#f00000"], [428, "피봇 2차 저항", "#6a6a9a"], [608, "피봇 1차 저항", "#aaa"], [788, "피봇 기준선(전일)", "#f00000"], [1037, "종가 지수 5", "#e800e8"],
    [1190, "10", "#1414e0"], [1230, "20", "#ffe680"], [1275, "60", "#109a5a"], [1322, "120", "#222"],
  ];
  const axis: [number, string, boolean][] = [
    [246, "03/25", true], [434, "15", false], [533, "03/26", true], [754, "10", false], [975, "11", false], [1194, "12", false], [1415, "13", false], [1636, "14", false], [1855, "15", false],
  ];
  const arrows: P[] = [
    [264, 712], [482, 712], [515, 725], [537, 650], [547, 585], [581, 400], [682, 343], [864, 278], [855, 292], [1441, 545], [1562, 600], [1641, 648], [1729, 610], [1761, 583], [1914, 612], [1925, 530],
  ];
  return (
    <svg viewBox="0 0 1399 382" className="block w-full h-[382px] shrink-0 bg-white border-t border-[#999]">
      <g stroke="#dcdcdc">
        {[449, 543, 636, 727, 819, 912, 1005, 1160].map((y) => <line key={y} x1="90" x2="1310" y1={s.y(y)} y2={s.y(y)} />)}
        {[434, 754, 975, 1194, 1415, 1636, 1855].map((x) => <line key={x} x1={s.x(x)} x2={s.x(x)} y1="0" y2="357" />)}
      </g>
      <rect x={s.x(252)} y={s.y(478)} width={s.x(530) - s.x(252)} height="18" fill="#ffcc00" />
      <rect x={s.x(533)} y={s.y(282)} width={s.x(1938) - s.x(533)} height="16" fill="#ffcc00" />
      {pl([[252, 478], [530, 478]], "#f00000", 1.5, { strokeDasharray: "2 2" })}
      {pl([[248, 284], [530, 284]], "#f00000", 1.2)}
      {pl([[252, 793], [527, 793], [534, 270], [1938, 270]], "#9a9a9a", 5)}
      {pl([[540, 833], [1938, 833]], "#b5b5b5", 6)}
      {pl([[246, 356], [2212, 356]], "#f00000", 1.5)}
      {pl([[246, 941], [2212, 941]], "#1414e0", 1.5)}
      {pl([[252, 958], [527, 958]], "#33cccc", 4)}
      {pl([[252, 820], [525, 820], [545, 730], [580, 655], [670, 655], [683, 630], [720, 620], [845, 620], [868, 597], [1938, 597]], "#ff00ff", 4)}
      {pl([[528, 1062], [533, 900], [540, 816], [1938, 816]], "#ff0000", 7)}
      {pl([[533, 240], [533, 1300]], "#f00000", 1)}
      {pl([[512, 800], [528, 800], [533, 700], [545, 670], [562, 600], [581, 478], [670, 478], [682, 421], [715, 421], [727, 400], [845, 400], [858, 375], [868, 357]], "#f00000", 1.3)}
      {pl([[252, 893], [330, 878], [420, 880], [500, 862], [535, 850], [560, 810], [580, 755], [630, 720], [665, 695], [705, 645], [730, 600], [780, 570], [845, 548], [868, 518], [920, 525], [1000, 550], [1070, 620], [1160, 630], [1220, 660], [1300, 662], [1400, 680], [1440, 665], [1536, 665], [1620, 690], [1680, 720], [1730, 732], [1790, 712], [1850, 695], [1938, 685]], "#ffcc00", 5)}
      {pl([[252, 860], [420, 865], [530, 845], [600, 815], [650, 795], [720, 735], [800, 690], [868, 650], [930, 632], [1000, 625], [1100, 635], [1200, 645], [1350, 655], [1536, 660], [1640, 670], [1700, 685], [1938, 690]], "#3a9a6a", 1.2)}
      {pl(ma5, "#ff00ff", 3.5)}
      {pl([[252, 885], [400, 890], [530, 840], [560, 750], [580, 695], [620, 685], [660, 665], [680, 600], [725, 535], [760, 525], [845, 515], [868, 478], [920, 520], [960, 560], [1010, 580], [1040, 620], [1080, 662], [1130, 638], [1160, 640], [1200, 678], [1260, 660], [1330, 682], [1420, 670], [1500, 675], [1560, 670], [1640, 710], [1690, 750], [1720, 750], [1770, 700], [1830, 685], [1938, 675]], "#1414e0", 1.2)}
      <Candles data={data} w={4} s={s} />
      {pl([[252, 845], [350, 847], [430, 852], [533, 848], [600, 828], [670, 808], [740, 773], [800, 748], [868, 722], [950, 705], [1020, 693], [1160, 688], [1400, 684], [1640, 685], [1700, 693], [1750, 697], [1820, 692], [1938, 690]], "#333", 4)}
      {pl([[395, 360], [395, 900]], "#2222e0", 1, { strokeDasharray: "5 4" })}
      {pl([[867, 570], [867, 1045]], "#f00000", 1, { strokeDasharray: "5 4" })}
      {arrows.map(([x, y], i) => <SmallArrow key={i} x={s.x(x)} y={s.y(y)} />)}
      <rect x={s.x(272)} y={s.y(248)} width="71" height="19" fill="#efefef" stroke="#aaa" />
      <T x={s.x(280)} y={s.y(275)}>신풍제지</T>
      {row1.map(([x, t, c]) => <T key={x} x={s.x(x)} y={s.y(275)} c={c}>{t}</T>)}
      {row2.map(([x, t, c]) => <T key={x} x={s.x(x)} y={s.y(323)} c={c}>{t}</T>)}
      {[256, 396, 658, 806, 938, 1087, 1236].map((x) => <rect key={x} x={s.x(x)} y={s.y(263)} width="5" height="8" fill="#bbb" stroke="#777" />)}
      {[256, 404, 1012].map((x) => <rect key={x} x={s.x(x)} y={s.y(312)} width="5" height="8" fill="#bbb" stroke="#777" />)}
      <T x={s.x(410)} y={s.y(365)} c="#1414e0">최저 3,685 (14:48)</T>
      <T x={s.x(630)} y={s.y(1033)} c="#f00000">최고 4,000 (10:30)</T>
      <T x={s.x(2207)} y={s.y(425)} c="#1414e0" end>: 0</T>
      <T x={s.x(2207)} y={s.y(473)} c="#e800e8" end>: 0</T>
      <T x={s.x(2207)} y={s.y(522)} c="#f00000" end>: 0</T>
      <T x={s.x(2207)} y={s.y(571)} c="#c8c8c8" end>전일 종가: 3,760</T>
      <T x={s.x(2205)} y={s.y(571)} c="#f0c020" end>전일 저가: 3,880</T>
      <T x={s.x(2207)} y={s.y(620)} c="#9cc4e8" end>전일 최저시가: 3,685</T>
      <T x={s.x(2205)} y={s.y(620)} c="#f0c020" end>전일고가: 3,935</T>
      {data.slice(0, 153).map(([x, , , , , c], i) => {
        const base = x < 530 ? 1284 : x < 980 ? 1268 : x < 1170 ? 1284 : 1298;
        const top = volPeaks[i] ?? (x > 1905 ? 1276 : base + rnd(i * 11) * (x < 1170 ? 16 : 3));
        return <rect key={i} x={s.x(x) - 2} y={s.y(top)} width="4" height={s.y(1304) - s.y(top)} fill={tone[volPeaks[i] && volPeaks[i] < 1200 ? "r" : c]} />;
      })}
      {pl([[246, 1243], [2216, 1243]], "#ff0000", 2.5)}
      {pl([[252, 1252], [450, 1252], [500, 1272], [540, 1278], [1730, 1278], [1740, 1282], [1900, 1284]], "#999", 1.2)}
      {pl([[252, 1290], [530, 1285], [580, 1218], [620, 1240], [650, 1282], [690, 1225], [720, 1212], [760, 1250], [780, 1270], [840, 1275], [868, 1225], [900, 1210], [930, 1260], [1000, 1290], [1070, 1275], [1170, 1298], [1900, 1299], [1938, 1285]], "#d822b8", 1.2)}
      {pl([[252, 1295], [540, 1288], [590, 1268], [660, 1265], [720, 1242], [850, 1255], [880, 1243], [980, 1255], [1070, 1268], [1100, 1285], [1300, 1296], [1938, 1296]], "#e8a800", 1.5)}
      {pl([[252, 1292], [540, 1290], [650, 1282], [850, 1272], [980, 1262], [1200, 1268], [1400, 1285], [1536, 1295], [1938, 1298]], "#109a3a", 1.2)}
      {pl([[1231, 1075], [1231, 1300]], "#2222e0", 1, { strokeDasharray: "5 4" })}
      {([[280, "거래량", "#2a9d9d"], [375, "단순 5", "#d822b8"], [468, "20", "#e8a800"], [511, "60", "#109a3a"], [557, "120", "#777"]] as [number, string, string][]).map(([x, t, c]) => (
        <T key={x} x={s.x(x)} y={s.y(1107)} c={c}>{t}</T>
      ))}
      <rect x={s.x(256)} y={s.y(1095)} width="5" height="8" fill="#bbb" stroke="#777" />
      <T x={s.x(258)} y={s.y(1160)} c="#333">34,687주(58.73%)</T>
      <T x={s.x(582)} y={s.y(1137)} c="#f00000">최대 316,581 (10:30)</T>
      <path d={`M${s.x(832)} ${s.y(1139)}h12m0 -6l8 6l-8 6z`} stroke="#f00000" fill="#f00000" />
      <T x={s.x(1035)} y={s.y(1192)} c="#1414e0">최소 957 (12:09)</T>
      <T x={s.x(2214)} y={s.y(1103)} end c="#333">34,687주(58.73%)</T>
      <rect width="90" height="382" fill="#d5e0ee" />
      <rect x="1310" width="89" height="382" fill="#d5e0ee" />
      <rect y="357" width="1399" height="25" fill="#d5e0ee" />
      <path d="M90 0V382M1310 0V382M0 278H1399M0 357H1399" stroke="#8a8a8a" fill="none" />
      <path d={`M1307 0V${s.y(800)}`} stroke="#f00000" strokeWidth="3" />
      <path d={`M1307 ${s.y(800)}V${s.y(1065)}`} stroke="#125ccc" strokeWidth="3" />
      <Ticks x={90} y0={8} y1={276} step={15.5} dir={-1} />
      <Ticks x={1310} y0={8} y1={276} step={15.5} dir={1} />
      {labels.map(([y, t]) => (
        <g key={y}>
          <T x={83} y={s.y(y)} end>{t}</T>
          {t !== "4,000" && <T x={1321} y={s.y(y)}>{t}</T>}
          <path d={`M85 ${s.y(y + 3)}h5M1310 ${s.y(y + 3)}h8`} stroke="#777" />
        </g>
      ))}
      <T x={1321} y={s.y(358)}>4,000</T>
      <g stroke="#555" fill="#f4f4f4">
        <rect x="8" y={s.y(328)} width="17" height="17" strokeWidth="2" />
        <path d="M11 34H22M11 39H22M14 32V42M19 32V42" />
      </g>
      <T x={1311} y={s.y(270)} c="#e5281b">LC:3.80</T>
      <T x={1311} y={s.y(316)} c="#2466d8">HC:-4.38</T>
      <rect x="5" y={s.y(650)} width="80" height="18" fill="#e81b0c" />
      <T x={80} y={s.y(677)} c="#fff" end>3,825</T>
      <T x={79} y={s.y(728)} c="#e5281b" end>1.73%</T>
      <rect x="1316" y={s.y(650)} width="80" height="18" fill="#e81b0c" />
      <T x={1321} y={s.y(677)} c="#fff">3,825</T>
      <T x={1321} y={s.y(728)} c="#e5281b">1.73%</T>
      <rect x="5" y={s.y(1203)} width="80" height="18" fill="#125ccc" />
      <T x={80} y={s.y(1230)} c="#fff" end>34,687</T>
      <T x={79} y={s.y(1280)} c="#2466d8" end>58.73%</T>
      <rect x="1316" y={s.y(1203)} width="80" height="18" fill="#125ccc" />
      <T x={1321} y={s.y(1230)} c="#fff">34,687</T>
      <T x={1321} y={s.y(1280)} c="#2466d8">58.73%</T>
      {axis.map(([x, t, b]) => (
        <g key={x}>
          <line x1={s.x(x)} x2={s.x(x)} y1="357" y2="382" stroke="#999" />
          <T x={s.x(x) + 3} y={369} bold={b}>{t}</T>
        </g>
      ))}
      <T x={1321} y={369}>15:30:00</T>
      <CloseMark x={1385} y={283} />
    </svg>
  );
}

const zoomCandles: Candle[] = [
  [-647, 850, 882, 912, 912, "b"], [-550, 680, 765, 886, 910, "r"], [-452, 765, 765, 797, 825, "b"], [-352, 708, 708, 797, 825, "r"], [-255, 595, 622, 711, 735, "r"],
  [-156, 595, 622, 655, 683, "b"], [-58, 567, 567, 655, 683, "r"], [40, 538, 567, 569, 655, "r"], [139, 565, 595, 683, 683, "b"], [236, 538, 651, 683, 712, "r"],
  [336, 565, 595, 655, 683, "r"], [434, 595, 595, 627, 627, "b"], [533, 595, 625, 627, 627, "b"], [630, 595, 595, 655, 655, "b"], [729, 650, 680, 683, 683, "b"],
  [828, 680, 680, 683, 768, "b"], [925, 622, 622, 711, 711, "r"], [1025, 622, 622, 683, 740, "b"], [1123, 680, 681, 768, 853, "b"], [1222, 420, 448, 853, 853, "r"],
  [1320, 652, 652, 655, 655, "b"],
];
const zoomVol: [number, "r" | "b"][] = [
  [1289, "r"], [1236, "r"], [1285, "b"], [1272, "r"], [1232, "r"], [1289, "b"], [1281, "r"], [1269, "r"], [1288, "b"], [1265, "r"], [1293, "b"], [1289, "r"], [1289, "r"],
  [1293, "b"], [1273, "r"], [1288, "b"], [1277, "r"], [1281, "b"], [1216, "r"], [1160, "r"], [1216, "b"],
];

function ZoomChart() {
  const s = makeScale(1.6, 3, 435, -79);
  const pl = (pts: P[], c: string, w: number, extra = {}) => <polyline points={s.line(pts)} fill="none" stroke={c} strokeWidth={w} {...extra} />;
  const axis: [number, string][] = [[-400, "14:30"], [-8, "14:40"], [289, "14:50"], [584, "15:00"], [977, "15:10"], [1272, "15:30"]];
  return (
    <svg viewBox="0 0 1396 382" className="block w-full h-[382px] shrink-0 bg-white border-t border-[#999]">
      <g stroke="#dcdcdc">
        {[364, 506, 652, 795, 940, 1084, 1180].map((y) => <line key={y} x1="0" x2="1307" y1={s.y(y)} y2={s.y(y)} />)}
        {axis.map(([x]) => <line key={x} x1={s.x(x)} x2={s.x(x)} y1="0" y2="357" />)}
      </g>
      <rect x={s.x(-648)} y={s.y(1025)} width={s.x(1320) - s.x(-648)} height="26" fill="#c0c0c0" />
      {pl([[-648, 1082], [1320, 1082]], "#33cccc", 5)}
      {pl([[-648, 1062], [1320, 1062]], "#ff0000", 7, { strokeLinecap: "round" })}
      {pl([[-648, 391], [1320, 391]], "#00cc99", 3)}
      {pl([[-696, 421], [1388, 421]], "#f00000", 1.5)}
      {pl([[-696, 912], [1388, 912]], "#1414e0", 1.5)}
      {pl([[-648, 810], [-430, 806], [-255, 780], [-60, 757], [0, 740], [139, 725], [236, 717], [336, 702], [434, 698], [630, 690], [1170, 685], [1320, 662]], "#ffcc00", 5)}
      {pl([[-600, 900], [-500, 850], [-430, 838], [-350, 805], [-310, 770], [-255, 738], [-156, 706], [-58, 655], [0, 640], [40, 630], [139, 640], [236, 648], [300, 638], [434, 628], [533, 628], [590, 632], [729, 650], [828, 658], [925, 655], [1123, 680], [1150, 670], [1222, 610], [1320, 627]], "#ff00ff", 3)}
      {pl([[-648, 690], [-156, 688], [40, 680], [336, 678], [430, 674], [1130, 674], [1320, 666]], "#008000", 2.5)}
      {pl([[-648, 693], [-550, 696], [-156, 697], [-110, 692], [139, 688], [700, 686], [1170, 686], [1320, 681]], "#333", 4)}
      <Candles data={zoomCandles} w={59} s={s} />
      {zoomCandles.map(([x], i) => (
        <rect key={x} x={s.x(x) - 29} y={s.y(zoomVol[i][0])} width="58" height={s.y(1304) - s.y(zoomVol[i][0])} fill={tone[zoomVol[i][1]]} />
      ))}
      {([[-550, 500], [-255, 417], [1123, 500], [1222, 240]] as P[]).map(([x, y]) => (
        <path key={x} d={`M${s.x(x) - 10} ${s.y(y)}h20v29h10l-20 19l-20 -19h10z`} fill="#ff0000" />
      ))}
      {pl([[-647, 355], [-647, 800]], "#2222e0", 1, { strokeDasharray: "5 4" })}
      {pl([[1222, 900], [1222, 1080]], "#f00000", 1, { strokeDasharray: "5 4" })}
      {pl([[291, 1233], [336, 1233], [336, 1108], [336, 1290]], "#2222e0", 1, { strokeDasharray: "5 4" })}
      <rect x={s.x(-673)} y={s.y(248)} width="72" height="19" fill="#efefef" stroke="#aaa" />
      <rect x={s.x(-690)} y={s.y(263)} width="5" height="8" fill="#bbb" stroke="#777" />
      <rect x={s.x(-550)} y={s.y(263)} width="5" height="8" fill="#bbb" stroke="#777" />
      <T x={s.x(-665)} y={s.y(275)}>신풍제지</T>
      <T x={s.x(-535)} y={s.y(275)} c="#f00000">거래량 최고치 갱신</T>
      <T x={s.x(-634)} y={s.y(365)} c="#1414e0">최저 3,780 (14:21)</T>
      <T x={s.x(988)} y={s.y(1072)} c="#f00000">최고 3,885 (15:18)</T>
      <T x={s.x(910)} y={s.y(1172)} c="#f00000">최대 59,059 (15:18)</T>
      <path d={`M${s.x(1143)} ${s.y(1178)}h12m0 -6l8 6l-8 6z`} stroke="#f00000" fill="#f00000" />
      <T x={s.x(77)} y={s.y(1228)} c="#1414e0">최소 2,705 (14:51)</T>
      <T x={s.x(1384)} y={s.y(1136)} end c="#333">34,687주(58.73%)</T>
      <T x={s.x(1382)} y={s.y(863)} c="#1414e0" end>: 0</T>
      <T x={s.x(1382)} y={s.y(911)} c="#e800e8" end>: 0</T>
      <T x={s.x(1382)} y={s.y(960)} c="#f00000" end>: 0</T>
      <T x={s.x(1382)} y={s.y(1008)} c="#9cc4e8" end>전일 종가: 3,760</T>
      <T x={s.x(1380)} y={s.y(1008)} c="#f0c020" end>전일 저가: 3,880</T>
      <T x={s.x(1382)} y={s.y(1058)} c="#f0c020" end>전일종가: 3,685</T>
      <rect x="1307" width="89" height="382" fill="#d5e0ee" />
      <rect y="357" width="1396" height="25" fill="#d5e0ee" />
      <path d="M1307 0V382M0 290H1396M0 357H1396" stroke="#8a8a8a" fill="none" />
      <path d={`M1303 0V${s.y(1023)}`} stroke="#f00000" strokeWidth="3" />
      <path d={`M1303 ${s.y(1023)}V${s.y(1100)}`} stroke="#125ccc" strokeWidth="3" />
      <Ticks x={1307} y0={5} y1={288} step={9.6} dir={1} />
      {([[364, "3,875"], [503, "3,850"], [793, "3,800"], [938, "3,775"], [1168, "50,000"]] as [number, string][]).map(([y, t]) => (
        <g key={y}>
          <T x={1318} y={s.y(y)}>{t}</T>
          <path d={`M1307 ${s.y(y + 3)}h8`} stroke="#777" />
        </g>
      ))}
      <T x={1308} y={s.y(270)} c="#e5281b">LC:1.19</T>
      <T x={1308} y={s.y(318)} c="#2466d8">HC:-1.03</T>
      <rect x="1313" y={s.y(623)} width="80" height="18" fill="#125ccc" />
      <T x={1318} y={s.y(650)} c="#fff">3,825</T>
      <T x={1318} y={s.y(698)} c="#2466d8">-0.91%</T>
      <rect x="1313" y={s.y(1187)} width="80" height="18" fill="#125ccc" />
      <T x={1318} y={s.y(1214)} c="#fff">34,687</T>
      <T x={1318} y={s.y(1264)} c="#2466d8">58.73%</T>
      <T x={2} y={369} bold>03/26</T>
      {axis.map(([x, t]) => (
        <g key={x}>
          <line x1={s.x(x)} x2={s.x(x)} y1="357" y2="382" stroke="#999" />
          <T x={s.x(x) + 2} y={369}>{t}</T>
        </g>
      ))}
      <T x={1319} y={369}>15:30:00</T>
      <CloseMark x={1381} y={295} />
    </svg>
  );
}

function ChartPane({ active, children, thumb }: { active?: boolean; children: ReactNode; thumb: string }) {
  return (
    <div className={clsx("flex flex-col border-2", active ? "w-[1401px] border-[#f02020]" : "flex-1 border-transparent")}>
      <div className={clsx("flex h-[26px] shrink-0 mb-[3px]", active ? "bg-[#c9e6f1]" : "bg-[#e8e8e8]")}>
        <Quote name="신풍제지" className={clsx("flex-1", active ? "" : "bg-[#f1f1f1]")} />
        <b className="text-[16px] leading-[26px]">[3분]</b>
        <Btn label="확대" className="w-[19px] my-px !h-6"><Square size={14} /></Btn>
        <Btn label="닫기" className="w-[19px] my-px !h-6"><X size={16} /></Btn>
      </div>
      {children}
      <div className="mt-px"><ChartScroll thumb={thumb} /></div>
    </div>
  );
}

function MinuteWindow() {
  return (
    <Win className="left-[4px] top-[557px] w-[2823px] h-[494px] !border-t-[5px] !border-t-[#3a5791]" pad="mx-[4px] mb-[6px]" bg="bg-[#e6e6e6]">
      <div className="bg-[#d2d2d2] h-[36px] shrink-0 pt-[6px] pl-[5px]">
        <div className="flex h-[26px] gap-[2px]">
          <Btn label="패널" className="w-[26px]"><PanelLeft size={18} /></Btn>
          <Btn label="내리기" className="w-[26px]"><ArrowDownToLine size={17} /></Btn>
          <Combo value="주" label="구분" className="w-[41px]" />
          <Combo value="종목변경" label="변경 방식" className="w-[109px] -ml-[2px]" />
          <div className="relative h-full w-[90px] border border-[#a8a8a8] bg-white flex items-center pl-[3px]">
            <input aria-label="종목코드" defaultValue="002870" className="w-[52px] bg-[#0c7bd8] text-white text-[15px] leading-[22px]" />
            <Tri className="absolute right-[5px] text-[#555]" />
          </div>
          <IconSearch />
          <Speaker />
          <StockName name="신풍제지" className="w-[118px]" />
          <PeriodBar on="분" unit="3" combo="3" />
          <Field value="154" label="조회수" className="w-[40px] text-right" />
          <span className="w-[46px] text-[16px] leading-[26px] text-[#444]">/900</span>
          <div className="flex h-full text-[#555]">
            <Btn label="봉" className="w-[26px]"><ChartCandlestick size={18} /></Btn>
            <Btn label="지표" className="w-[26px]"><ChartSpline size={18} /></Btn>
            <Btn label="저장" className="w-[26px]"><Save size={18} /></Btn>
            <Btn label="설정" className="w-[26px]"><Settings size={18} /></Btn>
          </div>
        </div>
      </div>
      <div className="flex pl-[4px] pr-[5px]">
        <ChartPane active thumb="w-[156px]"><MinuteChart /></ChartPane>
        <ChartPane thumb="w-[23px]"><ZoomChart /></ChartPane>
      </div>
    </Win>
  );
}

/* ---------- [0254] broker window ---------- */

function BrokerWindow() {
  const top: Cell[][] = [
    ["10,104", "1,272,134", "키움증권", "키움증권", "1,200,479", "8,618"],
    ["7,940", "772,886", "미래대우", "미래대우", "698,618", "3,520"],
    ["1,112", "400,171", "신한금융투자", "신한금융투자", "479,253", "103"],
    ["2,400", "376,173", "NH투자증권", "한국투자증권", "366,970", "307"],
    ["525", "301,107", "한국투자증권", "NH투자증권", "353,256", "3,163"],
  ];
  const gone: Cell[][] = [
    ["10:02", "151,060", "KB증권", "11:09", "245,279", "삼    성"],
    ["09:11", "36,756", "하나금융투", "09:23", "75,972", "하나금융투"],
    ["09:06", "20,138", "이베스트", "09:04", "13,686", "이베스트"],
    ["09:04", "16,096", "HI투자증권", "09:00", "3,631", "대    신"],
    ["09:04", "14,223", "유진투자증", "09:00", "2,500", "교    보"],
    ["09:00", "707", "대    신", "", "", ""],
    ...Array.from({ length: 5 }, () => ["", "", "", "", "", ""]),
  ];
  const th = "font-normal text-[17px] p-0 border border-[#bcbcbc]";
  const td = "py-0 px-[3px] border-x border-[#bcbcbc]";
  return (
    <Win title="[0254] 증권사별 매매동향 - 당일주요거래원" icons={["fit", "copy", "pin", "T", "help"]} className="left-[7px] top-[1056px] w-[552px] h-[614px]">
      <div className="relative mt-[7px] px-[3px]">
        <Tabs items={[["*당일주요거래원", "w-[134px]"], ["거래원순간거래량", "w-[149px]"], ["거래원매물대분석", "w-[149px]"]]} />
        <div className="absolute right-[3px] top-px flex h-[22px]">
          <Btn label="이전" className="w-[19px]"><Tri className="rotate-90" /></Btn>
          <Btn label="다음" className="w-[19px] text-[#999]"><Tri className="-rotate-90" /></Btn>
        </div>
      </div>
      <div className="flex h-7 gap-[2px] mt-1 px-[3px] shrink-0">
        <Combo value="002870" label="종목코드" className="w-[76px]" num />
        <IconSearch className="w-[25px] -ml-px" />
        <StockName name="신풍제지" className="w-[129px]" />
        <span className="flex-1 text-[16px] leading-[28px] text-[#444] text-center whitespace-nowrap">매매상위 5개사 자료의 추정치</span>
        <Btn label="새로고침" className="w-[26px]"><RefreshCcw size={18} /></Btn>
        <Btn label="위로" className="w-[26px]">↑</Btn>
      </div>
      <div className="flex-1 bg-[#e6e6e6] mt-[3px] pt-1 px-[3px]">
        <table className="table-fixed border-collapse w-full h-[197px] bg-[#fdfdff] text-[16px] leading-[18px] border border-[#999]">
          <colgroup>
            <col className="w-[75px]" /><col className="w-[81px]" /><col className="w-[110px]" /><col className="w-[110px]" /><col className="w-[81px]" /><col className="w-[76px]" />
          </colgroup>
          <thead>
            <tr className="h-6">
              <th className={clsx(th, "bg-[#eafafd]")}>증감</th>
              <th colSpan={2} className={clsx(th, "bg-[#eafafd]")}>매도상위</th>
              <th colSpan={2} className={clsx(th, "bg-[#fdf0f6]")}>매수상위</th>
              <th className={clsx(th, "bg-[#fdf0f6]")}>증감</th>
            </tr>
          </thead>
          <tbody>
            {top.map((r, i) => (
              <tr key={i} className="h-6">
                {r.map((c, j) => <td key={j} className={clsx(td, j === 2 || j === 3 ? L : E)}>{c}</td>)}
              </tr>
            ))}
            <tr className="h-5 bg-[#f1f1f1] border-t border-[#999]">
              <td className={td} />
              <td className={clsx(td, E, B)}>0</td>
              <td colSpan={2} className={clsx(td, C, "text-[17px]")}>외국계합</td>
              <td className={clsx(td, E, R)}>0</td>
              <td className={td} />
            </tr>
            <tr className="h-5 bg-[#f1f1f1] border-t border-[#999]">
              <td className={clsx(td, E)}>22,081</td>
              <td className={clsx(td, E)}>3,122,471</td>
              <td colSpan={2} className={clsx(td, C, "text-[17px]")}>거래원합</td>
              <td className={clsx(td, E)}>3,098,576</td>
              <td className={clsx(td, E)}>15,711</td>
            </tr>
          </tbody>
        </table>
        <div className="flex h-[297px] mt-[6px] border border-[#999] bg-white">
          <Grid
            cols={["w-[75px]", "w-[83px]", "w-[96px]", "w-[73px]", "w-[85px]", "w-[98px]"]}
            head={["이탈시간", "매도량", "상위이탈원", "이탈시간", "매수량", "상위이탈원"]}
            headClass="h-[27px] bg-[#dae2ec]"
            align={[C, E, `${L} whitespace-pre`, C, E, `${L} whitespace-pre`]}
            rows={gone}
            rowClass={band3}
            className="flex-1 h-full"
          />
          <VScroll thumb="h-[230px]" className="w-[23px]" />
        </div>
      </div>
    </Win>
  );
}

function BrokerTickWindow() {
  return (
    <Win title="[0127] 거래원순간거래량" icons={["M", "fit", "copy", "pin", "T", "help"]} className="left-[562px] top-[1054px] w-[496px] h-[350px]">
      <div className="flex h-[26px] gap-[2px] mt-1 px-px shrink-0">
        <Combo value="888" label="거래원" className="w-[54px]" num />
        <Field value="외국계전" label="거래원명" size="text-[17px]" className="w-[69px] !px-[2px]" />
        <Combo value="종목" label="대상" className="w-[76px]" />
        <Combo value="002870" label="종목코드" className="w-[75px]" num />
        <IconSearch className="w-6 -ml-[2px]" />
        <Combo value="전체" label="구분" className="w-[101px]" />
        <Btn className="w-[22px]">?</Btn>
        <Btn className="flex-1">조회</Btn>
      </div>
      <div className="flex-1 bg-[#e6e6e6] mt-1 pt-[3px] px-px">
        <div className="flex h-[270px] border border-[#999]">
          <Grid
            cols={["w-[75px]", "w-[122px]", "w-[122px]", "w-[48px]", "w-[89px]"]}
            head={["시간", "종목명", "거래원명", "구분", "순간거래량"]}
            align={[C, L, L, C, E]}
            rows={Array.from({ length: 10 }, () => ["", "", "", "", ""])}
            rowClass={band3}
            className="flex-1 h-full"
          />
          <VScroll thumb="h-[110px]" />
        </div>
      </div>
    </Win>
  );
}

function ViWindow() {
  const th = "font-normal text-[17px] leading-[20px] p-0 border border-[#bcbcbc] bg-[#dae2ec]";
  return (
    <Win className="left-[9px] top-[1671px] w-[506px] h-[215px]" pad="m-[4px]">
      <div className="flex h-[26px] gap-[2px] mt-[3px] px-[2px] shrink-0">
        <Combo value="전체" label="시장" className="w-[74px]" />
        <Combo value="전체" label="종류" className="w-[95px]" />
        <Combo value="전체" label="방향" className="w-[80px]" />
        <Combo value="종목" label="대상" className="w-[57px]" />
        <Combo value="002870" label="종목코드" className="w-[79px]" num />
        <IconSearch className="w-[25px] -ml-[2px]" />
        <Btn className="w-[41px]">조회</Btn>
        <Btn label="더보기" className="flex-1 text-[#aaa]"><ChevronsRight size={20} /></Btn>
      </div>
      <div className="flex-1 bg-[#e6e6e6] mt-[3px] pt-[3px] px-[2px]">
        <div className="flex h-[168px] border border-[#999]">
          <table className="flex-1 table-fixed border-collapse h-full bg-white">
            <colgroup>
              <col className="w-[85px]" /><col className="w-[78px]" /><col className="w-[75px]" /><col className="w-[74px]" /><col className="w-[74px]" /><col className="w-[80px]" />
            </colgroup>
            <thead>
              <tr className="h-[25px]">
                <th rowSpan={2} className={th}>종목명</th>
                <th rowSpan={2} className={th}>구분</th>
                <th rowSpan={2} className={th}>발동<br />가격</th>
                <th colSpan={2} className={th}>기준가격</th>
                <th rowSpan={2} className={th}>발동<br />시간</th>
              </tr>
              <tr className="h-6">
                <th className={th}>동적VI</th>
                <th className={th}>정적VI</th>
              </tr>
            </thead>
            <tbody>
              {[0, 1, 2, 3, 4].map((i) => (
                <tr key={i} className={clsx("h-5", i > 2 && "bg-[#e5e5e5]")}>
                  {[0, 1, 2, 3, 4, 5].map((j) => <td key={j} className="border-x border-[#c8c8c8]" />)}
                </tr>
              ))}
            </tbody>
          </table>
          <VScroll thumb="h-[34px]" className="w-[21px]" />
        </div>
      </div>
    </Win>
  );
}

/* ---------- [0130] watchlist ---------- */

type Mark = [number, number, number, number, "r" | "b"];
type Watch = string | null | [string, string, string, string, string, string, Mark];

const flat: Mark = [11, 1, 6, 17, "r"];
const lists: Watch[][] = [
  [
    "양음양",
    ["레이크머", V, "3,505", "3.24", "3,483", R, [5, 6, 5, 16, "r"]],
    ["경남스틸", V, "2,690", "0.56", "2,471", R, flat],
    ["위지트", V, "1,890", "1.61", "16,223", R, [5, 8, 5, 17, "r"]],
  ],
  [
    "선행스펜 돌파",
    ["CS홀딩스", "", "60,300", "1.86", "346", R, [8, 7, 6, 17, "r"]],
    ["대주산업", V, "2,115", "0.71", "808", R, [11, 2, 6, 17, "b"]],
    ["SPC삼립", "", "72,500", "0.69", "528", R, [11, 5, 6, 16, "r"]],
    ["롯데푸드", "", "375,000", "1.35", "1,067", R, [12, 4, 6, 16, "r"]],
  ],
  [
    "볼린저 하단 스윙",
    ["화승인더", "", "7,700", "0.13", "4,433", R, [6, 2, 6, 16, "r"]],
    ["한국컴퓨", V, "3,925", "1.16", "1,036", R, [8, 3, 6, 16, "r"]],
    ["현대바이", V, "44,500", "1.55", "201,945", B, [11, 1, 5, 17, "r"]],
    "볼린저 상단",
    ["빅텍", V, "7,490", "1.08", "38,240", R, [12, 2, 5, 16, "r"]],
    ["이그잭스", V, "1,680", "", "5,775", "", [6, 1, 6, 16, "r"]],
    ["인선이엔", V, "13,000", "", "8,077", "", [6, 1, 6, 16, "b"]],
    ["세하", "", "1,910", "", "3,683", "", [6, 5, 5, 15, "b"]],
    ["신풍제지", "", "3,825", "1.73", "18,569", R, [13, 3, 6, 16, "r"]],
    null,
    "동시호가 반응",
    ["화신정공", V, "2,165", "3.59", "5,137", R, [4, 11, 4, 17, "r"]],
    ["레이크머", V, "3,505", "3.24", "3,483", R, [5, 5, 5, 16, "r"]],
    ["아시아종", V, "6,380", "8.32", "7,115", R, [4, 10, 4, 16, "r"]],
    ["한국조선", "", "132,000", "11.39", "246,265", R, [4, 10, 4, 16, "r"]],
    ["일성건설", "", "1,525", "8.93", "3,898", R, [4, 9, 4, 16, "r"]],
    ["대성창투", V, "3,475", "5.46", "62,513", R, [4, 6, 4, 16, "r"]],
    ["비덴트", V, "13,300", "1.92", "56,384", R, [4, 5, 4, 16, "r"]],
  ],
];

function WatchTable({ rows, first }: { rows: Watch[]; first?: boolean }) {
  const all = [...rows, ...Array.from({ length: 34 - rows.length }, () => null)];
  const td = "py-0 px-[2px] border-r border-[#c8c8c8] whitespace-nowrap overflow-hidden";
  return (
    <div className={clsx("flex-1 border h-[762px]", first ? "border-[3px] border-[#b83030]" : "border-[#999]")}>
      <table className="table-fixed border-collapse w-full h-full bg-white text-[16px] leading-[18px]">
        <colgroup>
          <col className="w-[83px]" /><col className="w-[78px]" /><col className="w-[62px]" /><col className="w-[50px]" /><col className="w-[80px]" /><col className="w-[42px]" />
        </colgroup>
        <thead>
          <tr className="h-[21px] bg-[#dae2ec] text-[17px]">
            {["종목명", "메모", "현재가", "등...", "거래대금", "..."].map((h) => <th key={h} className="font-normal p-0 border-r border-b border-[#bcbcbc] whitespace-nowrap">{h}</th>)}
          </tr>
        </thead>
        <tbody>
          {all.map((r, i) => {
            if (typeof r === "string") return <tr key={i} className="h-5 bg-[#40e0d0]"><td colSpan={6} className="p-0 text-center text-[17px]">{r}</td></tr>;
            const bg = i % 2 ? (first && i === 1 ? "bg-[#c4d4e9]" : "bg-[#ebebeb]") : "bg-white";
            if (!r) return <tr key={i} className={clsx("h-5", bg)}>{[0, 1, 2, 3, 4, 5].map((j) => <td key={j} className={td} />)}</tr>;
            const [n, nc, p, d, v, c, m] = r;
            return (
              <tr key={i} className={clsx("h-5", bg)}>
                <td className={clsx(td, L, nc)}>{n}</td>
                <td className={td} />
                <td className={clsx(td, E, c)}>{p}</td>
                <td className={clsx(td, E, c)}>{d}</td>
                <td className={clsx(td, E)}>{v}</td>
                <td className={clsx(td, C)}>
                  <svg viewBox="0 0 30 20" className="w-[30px] h-5 inline-block align-middle -my-px">
                    <rect x="0" y={m[0] - 1} width="30" height={m[1]} fill={tone[m[4]]} />
                    <rect x="14" y={m[2] - 1} width="2" height={m[3] - m[2]} fill={tone[m[4]]} />
                  </svg>
                </td>
              </tr>
            );
          })}
        </tbody>
      </table>
    </div>
  );
}

function WatchWindow() {
  return (
    <Win title="[0130] 관심종목 - 관심1" icons={["fit", "copy", "pin", "grid", "help"]} className="left-[1336px] top-[1054px] w-[1216px] h-[876px]">
      <div className="flex h-[26px] gap-[2px] mt-[6px] pl-[6px] shrink-0">
        <Btn label="패널" className="w-[26px]"><PanelLeft size={18} /></Btn>
        <Field value="01" label="그룹" className="w-[28px] !px-[3px]" />
        <Combo value="관심1" label="관심그룹" className="w-[126px]" />
        <Btn className="w-[46px]">등록</Btn>
        <Btn label="색상" className="w-[23px]"><span className="w-[9px] h-[10px] bg-[#555]" /></Btn>
        <Btn label="색상 메뉴" className="w-[16px] -ml-[3px] text-[#555]"><Tri /></Btn>
        <Btn className="w-[73px]">코드등록</Btn>
        <Check text="예상" className="w-[55px] ml-[2px]" />
        <div className="flex h-full">
          <Btn className="w-[27px] bg-[#4f80c4] text-white">1</Btn>
          <Btn className="w-[26px]">2</Btn>
          <Btn className="w-[26px]">3</Btn>
          <Btn label="표" className="w-[26px]"><Grid2x2 size={18} /></Btn>
          <Btn label="새로고침" className="w-[26px]"><RefreshCcw size={17} /></Btn>
        </div>
      </div>
      <div className="flex h-[26px] mt-[7px] pl-[6px] pr-px shrink-0">
        <div className="flex gap-[3px]">
          {Array.from({ length: 22 }, (_, i) => (
            <Btn key={i} className={clsx("w-[46px]", i === 0 ? "bg-[#4f80c4] text-white" : i > 3 ? "text-[#8a8a8a]" : "")}>{i + 1}</Btn>
          ))}
        </div>
        <div className="flex gap-[2px] ml-auto">
          <Btn className="w-[49px]">필드</Btn>
          <Btn label="이전" className="w-[27px] text-[#555]"><Tri className="rotate-90" /></Btn>
          <Btn label="다음" className="w-[27px] text-[#555]"><Tri className="-rotate-90" /></Btn>
        </div>
      </div>
      <div className="flex-1 flex gap-1 bg-[#e6e6e6] mt-[6px] pt-[2px] pl-[3px] pr-1">
        {lists.map((l, i) => <WatchTable key={i} rows={l} first={i === 0} />)}
      </div>
    </Win>
  );
}

/* ---------- condition search windows ---------- */

type Hit = [string, string, string, number, number, string?];

function HitBar({ a, b, c }: { a: number; b: number; c: "r" | "b" }) {
  return (
    <svg viewBox="0 0 30 20" className="w-[30px] h-5 inline-block align-middle -my-px">
      <path d="M15 0V20" stroke="#aaa" />
      <path d="M4 10H28" stroke={tone[c]} strokeWidth="1.500" />
      <rect x={4 + a * 0.24} y="5" width={Math.max(1, (b - a) * 0.24)} height="10" fill={tone[c]} />
    </svg>
  );
}

function SearchWindow({ title, count, cond, hits, blues, className, tableH, track = "bg-[#cdcdcd]" }: {
  title: string;
  count: string;
  cond: string;
  hits: Hit[];
  blues?: string[];
  className: string;
  tableH: string;
  track?: string;
}) {
  const td = "py-0 px-[2px] border-r border-[#c8c8c8] whitespace-nowrap overflow-hidden";
  return (
    <Win className={className} pad="mt-[5px] mx-[3px] mb-[3px]" bg="bg-[#e6e6e6]">
      <div className="bg-[#d2d2d2] border-b border-[#b8b8b8] pt-[7px] pl-2 shrink-0 overflow-hidden">
        <div className="flex h-[27px] gap-[3px]">
          <Btn label="다시 검색" className="w-[27px]"><RotateCw size={17} /></Btn>
          <Btn label="일시정지" className="w-[27px]"><Pause size={16} fill="#555" strokeWidth={0} /></Btn>
          <Field value={title} label="조건식" size="text-[17px]" className="flex-1" />
        </div>
        <div className="flex h-[27px] gap-[3px] mt-[6px] mb-[5px] items-center text-[17px] text-[#555]">
          <Btn label="설정" className="w-[27px]"><Settings size={18} /></Btn>
          <Btn label="중지" className="w-[27px]"><X size={17} /></Btn>
          <span className="w-[82px] pl-[3px] shrink-0 whitespace-nowrap leading-none text-[16px]">종목수:{count}</span>
          <Check text="자동삭제" on className="text-black" />
          <Check text="종목알림" className="text-black" />
        </div>
      </div>
      <div className="flex pl-[9px] pt-[5px] shrink-0 overflow-hidden text-[17px] leading-[26px]">
        <div className="w-[42px] shrink-0 text-[#555]">조건<br />대상</div>
        <div className="w-[170px] shrink-0 bg-white border border-[#999] text-[16px] leading-[25px] text-[#444]">
          <p className="overflow-hidden whitespace-nowrap pl-1 border-b border-[#999]">{cond}</p>
          <p className="overflow-hidden whitespace-nowrap pl-1">&lt;업종대상(전체)&gt;&lt;관리</p>
        </div>
        <div className="w-[76px] shrink-0 ml-[2px] flex flex-col gap-[2px]">
          <button className="flex-1 border-2 border-[#2b62d9] bg-[#c5e2f2] leading-none">비교분석</button>
          <button className="flex-1 border-2 border-[#f23a2a] bg-[#fbd6d2] leading-none">지표분석</button>
        </div>
      </div>
      <div className="flex-1 min-h-0 flex mt-1 ml-[6px] bg-[#fdfdff] border border-[#999]">
        <div className="flex-1">
          <table className={clsx("table-fixed border-collapse w-[272px] text-[16px] leading-[18px]", tableH)}>
            <colgroup>
              <col className="w-[86px]" /><col className="w-[71px]" /><col className="w-[81px]" /><col className="w-[34px]" />
            </colgroup>
            <thead>
              <tr className="h-[22px] bg-[#dae2ec] text-[17px]">
                {["종목명", "등락률", "거래대금", "L.."].map((h) => <th key={h} className="font-normal p-0 border-r border-b border-[#bcbcbc] whitespace-nowrap">{h}</th>)}
              </tr>
            </thead>
            <tbody>
              {hits.map(([n, d, v, a, b, nc], i) => (
                <tr key={n} className={clsx("h-5", i === 0 ? "bg-[#c9e6f1]" : i % 4 >= 2 ? "bg-[#ebebeb]" : "bg-white")}>
                  <td className={clsx(td, L, nc)}>{n}</td>
                  <td className={clsx(td, signed(d))}>{d}</td>
                  <td className={clsx(td, E)}>{v}</td>
                  <td className="p-0 border-r border-[#c8c8c8] text-center">
                    <HitBar a={a} b={b} c={blues?.includes(n) || (d.startsWith("-") && true) ? "b" : "r"} />
                  </td>
                </tr>
              ))}
            </tbody>
          </table>
        </div>
        <div className={clsx("w-[21px] shrink-0 flex flex-col items-center", track)}>
          <span className="bg-[#f0f0f0] w-full flex justify-center py-[3px]"><ChevronUp size={16} strokeWidth={3} /></span>
        </div>
      </div>
    </Win>
  );
}

const hitsA: Hit[] = [
  ["신풍제지", "+1.73", "18,569", 0, 28], ["대륙제관", "-1.17", "3,889", 0, 82, V], ["서한", "-0.31", "4,885", 30, 65, V], ["세하", "0", "3,683", 35, 75],
  ["태양", "0", "5,974", 25, 40, V], ["인선이엔티", "0", "8,077", 66, 82, V], ["이그잭스", "0", "5,775", 72, 75, V], ["빅텍", "+1.08", "38,240", 12, 35, V],
  ["중앙백신", "-2.08", "25,910", 30, 45, V], ["청담러닝", "+3.95", "14,518", 0, 68, V], ["네오오토", "-5.40", "19,214", 35, 85, V], ["컴퍼니케이", "+4.91", "14,693", 28, 85, V],
];
const hitsB: Hit[] = [
  ["롯데손해보", "+3.15", "12,970", 0, 28], ["삼성전자", "+0.37", "1,044,262", 66, 84], ["한솔로지스", "+6.24", "38,001", 7, 40], ["부방", "+13.43", "41,094", 0, 90, V],
  ["대성창투", "+5.46", "62,513", 43, 100, V], ["인터파크", "-1.55", "18,418", 40, 83, V], ["우리기술투", "+7.00", "299,592", 7, 78, V], ["포스코인터", "-2.39", "22,540", 23, 100],
  ["iMBC", "+0.72", "29,469", 18, 24, V], ["신한지주", "+1.95", "106,048", 8, 65], ["삼성출판사", "+0.74", "55,716", 38, 41], ["STX엔진", "+13.23", "13,574", 0, 65],
  ["BNK금융지", "+2.28", "10,646", 7, 83], ["에이플러스", "+7.47", "15,642", 0, 68], ["켄코아에어", "+10.14", "28,304", 0, 65, V],
];
const hitsC: Hit[] = [
  ["한국조선해", "+11.39", "246,265", 3, 100], ["일성건설", "+8.93", "3,898", 17, 100], ["대성창투", "+5.46", "62,513", 42, 100, V], ["비덴트", "+1.92", "56,384", 47, 100, V],
  ["아시아종묘", "+8.32", "7,115", 0, 100, V],
];
const hitsD: Hit[] = [
  ["하이트진로", "-0.39", "17,173", 30, 73], ["유한양행", "+1.48", "9,369", 27, 100], ["DL", "0", "41,031", 8, 16], ["한국앤컴퍼", "+4.46", "7,927", 0, 86],
  ["삼천당제약", "-1.82", "18,272", 0, 52, V], ["기아차", "-0.86", "227,022", 30, 86], ["현대건설", "+0.92", "36,054", 30, 38], ["한화", "+2.72", "14,065", 10, 70],
  ["유니온", "+0.11", "26,798", 3, 64], ["DB하이텍", "+2.03", "40,554", 10, 45], ["CJ", "+2.50", "6,933", 10, 93], ["LG상사", "+2.89", "16,792", 46, 82],
  ["동국제강", "+7.96", "28,016", 10, 87], ["백광산업", "-0.32", "57,273", 28, 36], ["현대해상", "-1.05", "12,957", 0, 52], ["진흥기업", "-2.90", "12,445", 20, 73],
  ["아모레G", "+0.47", "11,485", 50, 75], ["동양물산", "-0.31", "16,569", 0, 18], ["부광약품", "-0.64", "11,957", 50, 82], ["혜인", "-0.26", "95,874", 12, 33],
  ["성보화학", "+4.74", "7,021", 52, 88], ["쌍용양회", "+7.86", "148,760", 0, 68], ["대한항공", "+4.66", "132,199", 10, 80], ["LG", "+1.36", "33,214", 22, 60],
  ["보령제약", "-0.47", "8,146", 20, 52], ["롯데정밀화", "+0.70", "8,146", 6, 9], ["현대제철", "+4.04", "123,831", 20, 80], ["동방", "-2.06", "19,924", 0, 45],
  ["세방전지", "-1.31", "10,204", 20, 73], ["한국가구", "+2.38", "14,488", 10, 35, V], ["효성", "+3.31", "12,909", 20, 90], ["덕성", "+12.33", "131,805", 42, 92],
  ["성신양회", "+5.54", "22,510", 3, 80],
];

/* ---------- left tool strip ---------- */

const wave = <path d="M2 22C6 12 8 12 11 17S16 12 20 18L23 8" fill="none" stroke="#bdbdbd" strokeWidth="1.500" />;
const dot = (x: number, y: number) => <rect key={`${x}-${y}`} x={x - 1.5} y={y - 1.5} width="3" height="3" fill="#d02020" />;
const toolIcons: ReactNode[] = [
  <g><path d="M7 6H13Q17 6 17 9T14 12H10Q8 12 8 15T11 18H17" fill="none" stroke="#2a4a9a" strokeWidth="3.500" /><path d="M8 1V11L2 6ZM16 13V23L22 18Z" fill="#2a4a9a" /></g>,
  <g stroke="#777" fill="none"><path d="M9 3H3V10H9M3 14H9V21H3M15 3H21V10H15M21 14H15V21H21" /><path d="M9 6H16M15 17H8" stroke="#1c3f94" strokeWidth="2" /><path d="M15 3L19 6L15 9ZM9 14L5 17L9 20Z" fill="#1c3f94" stroke="none" /></g>,
  <g fill="none" stroke="#e09010"><circle cx="12" cy="12" r="7" strokeWidth="3.500" strokeDasharray="4 1.500" /><circle cx="12" cy="12" r="3.500" stroke="#8a5a10" /></g>,
  <g>{wave}<path d="M12 9L17 2L22 5L17 12Z" fill="#fff" stroke="#555" /><text x="0" y="22" fontSize="9" fontWeight="700" fill="#1c3f94">ALL</text></g>,
  <g>{wave}<path d="M9 12L15 3L21 7L15 15Z" fill="#fff" stroke="#555" /></g>,
  <g>{wave}<path d="M2 17L21 6" stroke="#1c3f94" strokeWidth="1.500" />{dot(2, 17)}{dot(21, 6)}</g>,
  <g>{wave}<path d="M2 8H22" stroke="#1c3f94" strokeWidth="1.500" />{dot(3, 8)}{dot(21, 8)}</g>,
  <g>{wave}<text x="1" y="9" fontSize="9" fontWeight="700" fill="#1c3f94">G-L</text><path d="M7 20L20 6" stroke="#1c3f94" />{dot(7, 21)}</g>,
  <g>{wave}<path d="M2 4H22M2 9H22M2 15H22M2 20H22" stroke="#1c3f94" strokeWidth="1.500" />{dot(2, 4)}{dot(22, 20)}</g>,
  <g fill="none" stroke="#999"><path d="M2 14A10 10 0 0 1 22 21M6 16A7 7 0 0 1 18 21M4 8A16 16 0 0 1 23 17" /><path d="M3 3L9 21" stroke="#1c3f94" strokeWidth="1.500" />{dot(3, 3)}</g>,
  <g>{wave}<path d="M2 15L20 4M2 20L20 9" stroke="#1c3f94" strokeWidth="1.500" /><path d="M10 10V19L16 14Z" fill="#1c3f94" /><rect x="15" y="14" width="8" height="8" fill="#fff" stroke="#555" /><path d="M19 15.500V20.500M16.500 18H21.500" stroke="#333" /></g>,
  <g>{wave}<path d="M8 3V18L12 14L15 21L18 20L14 13H19Z" fill="#1c3f94" /></g>,
  <g>{wave}<path d="M2 18H8V8H12" fill="none" stroke="#1c3f94" /><rect x="12" y="3" width="10" height="11" fill="#fff" stroke="#333" /><text x="14.500" y="12" fontSize="9" fontWeight="700">1</text></g>,
  <g>{wave}<text x="1" y="9" fontSize="9" fontWeight="700" fill="#1c3f94">S</text><path d="M4 21L22 4M4 21L22 12M4 21L14 2" stroke="#1c3f94" />{dot(4, 21)}</g>,
  <g>{wave}<path d="M2 5H17" stroke="#d02020" strokeWidth="2" /><path d="M2 11H17" stroke="#333" strokeWidth="2" /><path d="M2 17H17" stroke="#2a62c4" strokeWidth="2" /><text x="18" y="8" fontSize="7">H</text><text x="18" y="15" fontSize="7">C</text><text x="18" y="22" fontSize="7">L</text></g>,
  <g><path d="M2 10H10L6 16ZM5 6H7V11H5Z" fill="#1c5fc4" stroke="#1c5fc4" /><path d="M14 14H22L18 8ZM17 13H19V18H17Z" fill="#d02020" stroke="#d02020" /></g>,
  <g>{wave}<path d="M3 3V21M9 3V21M15 3V21M21 3V21" stroke="#1c3f94" strokeWidth="1.200" /></g>,
  <g><rect x="3" y="4" width="17" height="16" fill="#f8c8a0" stroke="#e07020" />{wave}</g>,
  <g><circle cx="11" cy="12" r="8" fill="#a8d0f0" stroke="#3a8ad0" />{wave}</g>,
  <g>{wave}<path d="M3 18L8 13L12 5L17 17" fill="none" stroke="#1c3f94" strokeWidth="1.500" />{dot(3, 18)}{dot(12, 5)}{dot(17, 17)}</g>,
  <g><path d="M3 12L21 3" stroke="#888" />{dot(3, 12)}{dot(21, 3)}<text x="0" y="22" fontSize="8" fontWeight="700" fill="#1c3f94">AUTO</text></g>,
  <g>{wave}<path d="M3 16L8 19L12 7L17 17" fill="none" stroke="#1c3f94" strokeWidth="1.500" />{dot(3, 16)}{dot(12, 7)}{dot(17, 17)}</g>,
  <g>{wave}<text x="2" y="13" fontSize="14" fontWeight="700" fill="#1c3f94" fontFamily="Liberation Serif, serif">T</text></g>,
];

function ToolStrip() {
  return (
    <aside className="w-11 shrink-0 bg-white">
      <div className="h-[945px] bg-[#f0f0f0] border-b border-r border-[#aaa] pt-[3px] pb-[6px] flex flex-col items-center pr-[9px] pl-[4px]">
        <div className="w-full border-t-2 border-dotted border-[#a0a0a0] mb-2" />
        <div className="flex-1 flex flex-col justify-between">
          {toolIcons.map((ic, i) => (
            <button key={i} aria-label={`도구 ${i + 1}`} className="w-8 h-8 shrink-0 border-2 border-[#b0b0b0] bg-[#f0efec] flex items-center justify-center">
              <svg viewBox="0 0 24 24" className="w-[26px] h-[26px]">{ic}</svg>
            </button>
          ))}
        </div>
      </div>
    </aside>
  );
}

/* ---------- top bars ---------- */

function TopBars() {
  const menu = ["기능", "주식", "주식주문", "ETF/ELW", "로보마켓", "영웅검색", "투자정보", "차트", "SPECIAL", "온라인업무", "고객서비스", "보기"];
  const tile = "w-[27px] h-7 rounded-[5px] bg-[#f3f6fb] flex items-center justify-center";
  return (
    <header className="shrink-0">
      <div className="h-[33px] bg-[#3a5791] text-white flex items-center pl-[5px] pr-2">
        <svg viewBox="0 0 22 26" className="w-[22px] h-[26px] mr-[5px]">
          <rect width="22" height="26" rx="1" fill="#dcdcdc" />
          <path d="M8 3L10 7L15 4L13 8L18 7L12 12L19 21L14 18L11 14L6 23L8 16L3 17L8 12L4 9L8 9Z" fill="#d81e10" />
        </svg>
        <h1 className="text-[17px] leading-none">영웅문</h1>
        <div className="ml-auto flex items-center text-[#ccd8ee] text-[16px] leading-none whitespace-nowrap">
          <span>금융센터 1544-9000/1544-9911 | 주문 1544-4989 | ARS 1544-9900</span>
          <Tri className="ml-[13px] mr-4" />
          <div className="flex items-center gap-[14px] border-l border-[#2f4a80] pl-[13px] pr-[13px]">
            <MessageCircle size={20} fill="#8fa3cc" />
            <svg viewBox="0 0 20 20" className="w-5 h-5"><path d="M3 5H9L14 2L19 3L18 10L14 12L17 18H3Z" fill="#a8b8da" /><path d="M8 7V15M8 11L13 7M9 11L13 15" stroke="#3a5791" strokeWidth="2" /></svg>
            <Home size={20} fill="#8fa3cc" />
          </div>
          <div className="flex border-l border-[#2f4a80] pl-[6px] pr-2">
            {[1, 2, 3, 4, 5, 6, 7, 8].map((n) => <button key={n} className={clsx("w-5 text-center", n === 1 && "underline text-white font-bold")}>{n}</button>)}
          </div>
          <div className="flex items-center gap-[10px] border-l border-[#2f4a80] pl-[13px]">
            <MonitorDown size={20} /><Minus size={20} className="translate-y-1" /><Copy size={18} className="-scale-x-100" /><X size={20} className="ml-1" />
          </div>
        </div>
      </div>
      <div className="border-x-4 border-[#3a5791]">
        <nav className="h-[31px] bg-gradient-to-b from-[#d6d6d6] to-[#e3e3e3] border-b border-[#c2c6cc] flex items-center gap-[18px] pl-[14px] text-[17px] leading-none">
          {menu.map((m) => <a key={m} href="#" className={m === "로보마켓" ? "text-[#f03020]" : "text-[#444]"}>{m}</a>)}
        </nav>
        <div className="h-[54px] bg-gradient-to-b from-[#abb9d4] to-[#c0cbde] flex text-[#4a5568] text-[17px] border-t border-white/60">
          <div className="w-[21px] flex flex-col items-center shrink-0 pr-[5px]">
            <X size={12} className="mt-[2px]" />
            <span className="w-[7px] h-[34px] border-x-2 border-[#e4e9f3] mt-[3px]" />
          </div>
          <div className="w-[135px] border-r border-[#d3dbe9] pt-[11px] shrink-0">
            <div className="w-[127px] h-[29px] rounded-full bg-[#4b4644] flex items-center pl-3 text-[17px] text-[#ffb81c]">
              <input aria-label="화면번호" defaultValue="0193" className="w-[52px] bg-transparent leading-none" />
              <span className="h-full w-6 border-x border-[#2f2b2a] flex items-center justify-center text-white"><Tri /></span>
              <Search size={17} className="ml-[6px] text-[#cfcfcf]" />
            </div>
          </div>
          <div className="w-[236px] border-r border-[#d3dbe9] pt-1 pl-[10px] shrink-0 relative">
            <div className="flex gap-2">
              <button aria-label="저장" className={tile}><Save size={20} className="text-[#c07818]" fill="#f6c25a" /></button>
              <button aria-label="인증" className={tile}><Key size={20} className="text-[#e88a10]" fill="#f8b030" /></button>
              <button aria-label="잠금" className={clsx(tile, "!bg-[#d0a888]")}><Lock size={19} className="text-[#f0a818]" fill="#f8d048" /></button>
              <button aria-label="시계" className={tile}><Clock size={21} className="text-[#7a8594]" /></button>
              <button aria-label="계산기" className={clsx(tile, "!bg-[#4a5462]")}><Calculator size={21} className="text-[#f4f4f4]" /></button>
              <button aria-label="설정" className={tile}><Settings size={21} className="text-[#4c5e7c]" /></button>
            </div>
            <div className="flex h-[14px] mt-[4px] w-[211px] bg-[#c4c8ce] text-[12px] leading-[13px] font-bold text-[#555] border border-[#aab0bb]">
              {["S1", "S2", "S3", "S4", "", ""].map((t, i) => <button key={i} className="flex-1 border-r border-[#aab0bb]">{t}</button>)}
            </div>
            <Tri className="rotate-90 absolute right-1 top-[24px]" />
          </div>
          {[["추천", "메뉴", "w-[69px]"], ["주식", "툴바", "w-[69px] text-black"], ["일별", "추이", "w-[60px]"]].map(([a, b, w], i) => (
            <button key={a} className={clsx("border-r border-[#d3dbe9] flex items-center justify-around pl-[6px] leading-[23px]", w)}>
              <span>{a}<br />{b}</span>
              {i < 2 && <Tri className="text-[#5a6478]" />}
            </button>
          ))}
          <div className="ml-auto w-[115px] border-l border-[#d3dbe9] text-[16px] text-[#55606f]">
            <div className="h-[26px] flex items-center gap-[9px] pl-[10px] border-b border-[#d3dbe9]"><CalendarDays size={20} />21/03/28</div>
            <div className="h-[26px] flex items-center gap-[9px] pl-[10px]"><Clock size={20} />22:47:35</div>
          </div>
        </div>
      </div>
    </header>
  );
}

function TaskRow() {
  const items = ["[0728] 해외증시 - ...", "[0183] 예상체결등락...", "[0155] 신규상장/정...", "[0177] 특정일자 상...", "[0118] 종목별 예수..."];
  return (
    <div className="absolute left-[2px] bottom-[3px] w-[1455px] h-[47px] flex text-white">
      {items.map((t) => (
        <div key={t} className="flex-1 bg-[#9b9ea3] border-l-2 border-[#c9cbce] flex items-start gap-2 px-[6px] pt-2 text-[16px] leading-none whitespace-nowrap">
          <Badge />
          <span className="flex-1 pt-2">{t}</span>
          <span className="flex gap-[9px] pt-[3px] text-[#d3d6da] mr-1"><Copy size={15} className="-scale-x-100" /><Square size={15} /><X size={16} /></span>
        </div>
      ))}
    </div>
  );
}

export default function App() {
  return (
    <div className="min-h-screen flex flex-col bg-white text-black font-['Liberation_Sans','Noto_Sans_CJK_KR',sans-serif]">
      <TopBars />
      <div className="flex-1 flex border-x-4 border-[#3a5791]">
        <ToolStrip />
        <main className="flex-1 relative bg-[#40444c] border-l-2 border-t border-[#6b6e73] min-h-[1946px] overflow-hidden">
          <div className="absolute inset-0 -left-[2px] -top-px">
            <TaskRow />
            <IndexWindow />
            <DailyWindow />
            <InvestorWindow />
            <StockInvestorWindow />
            <RankWindow />
            <OrderWindow />
            <TickWindow />
            <MinuteWindow />
            <BrokerWindow />
            <BrokerTickWindow />
            <ViWindow />
            <WatchWindow />
            <SearchWindow
              className="left-[2553px] top-[1054px] w-[310px] h-[886px]"
              title="종가(볼린저상단)" count="12" cond="주가범위:0일전 종가기" hits={hitsA} blues={["세하", "인선이엔티"]} tableH="h-[282px]" track="bg-[#a6a6a6]"
            />
            <SearchWindow
              className="left-[2864px] top-[1056px] w-[311px] h-[884px]"
              title="전고점 돌파(일)" count="15" cond="주가범위:0일전 종가기" hits={hitsB} tableH="h-[347px]"
            />
            <SearchWindow
              className="left-[3174px] top-[1057px] w-[312px] h-[884px]"
              title="종가(동시호가)" count="5" cond="시가총액:현재가기준 !" hits={hitsC} tableH="h-[130px]"
            />
            <SearchWindow
              className="left-[3490px] top-[1054px] w-[294px] h-[887px]"
              title="거래대금[1분]_NEW" count="100" cond="주가범위:0일전 종가기" hits={hitsD} blues={["DL", "유니온", "아모레G"]} tableH="h-[738px]" track="bg-[#e4e4e4]"
            />
          </div>
        </main>
      </div>
      <div className="h-[4px] bg-[#f0f0f0]" />
    </div>
  );
}
